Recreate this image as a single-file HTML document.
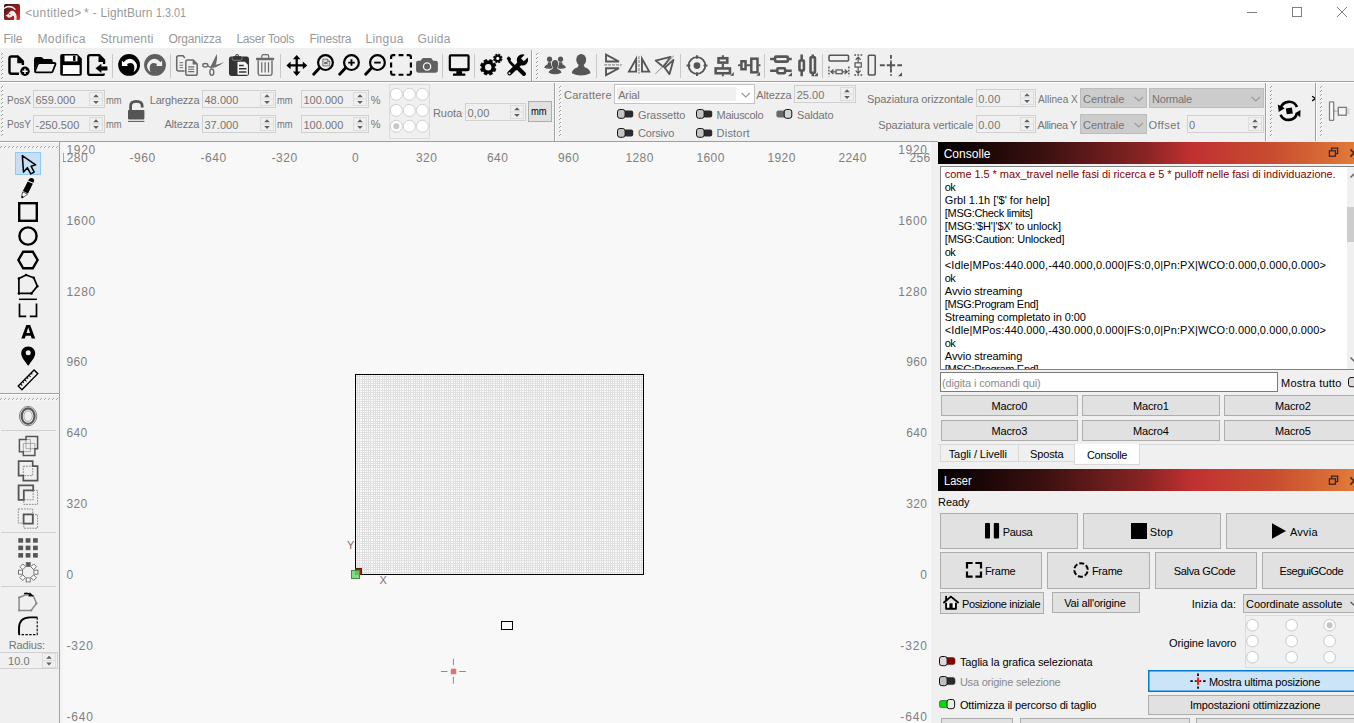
<!DOCTYPE html>
<html><head><meta charset="utf-8"><title>LightBurn</title>
<style>
html,body{margin:0;padding:0;overflow:hidden;}
#root{position:absolute;left:0;top:0;width:1354px;height:723px;overflow:hidden;}
body{width:1354px;height:723px;overflow:hidden;position:relative;background:#f0f0f0;font-family:"Liberation Sans",sans-serif;font-size:11px;color:#000;}
.a{position:absolute;box-sizing:border-box;overflow:hidden;}
.t{position:absolute;white-space:pre;}
.inp{background:#f0f0f0;border:1px solid #d0d0d0;}
.btn{background:#e1e1e1;border:1px solid #adadad;}
.g{color:#787878;}
</style></head><body><div id="root">
<div class="a " style="left:0px;top:0px;width:1354px;height:49px;background:#fff;"></div>
<svg class="a" style="left:4px;top:4px;" width="16" height="16" viewBox="0 0 16 16"><defs><linearGradient id="lg1" x1="0" y1="0" x2="1" y2="1"><stop offset="0" stop-color="#2a0c0c"/><stop offset="0.35" stop-color="#7a1c20"/><stop offset="0.7" stop-color="#b0181e"/><stop offset="1" stop-color="#ff2626"/></linearGradient></defs>
<rect x="0" y="0" width="16" height="16" rx="1.6" fill="url(#lg1)"/>
<path d="M0 4C2 1.400 8.200 0.400 12 5.400L11 6C8 2.600 3 2.800 0 5.200Z" fill="#f6eeee"/>
<path d="M7 7C9 6 11.600 8 12.400 11C12.800 13 12.700 15 12.400 16L9.800 16C10.800 14 10.400 12 8.800 11.400C8 13 6 13.800 4 13.600L3.200 12.400L1.600 11.600L4.400 10C5 8.600 6 7.600 7 7Z" fill="#f8f0f0"/>
<circle cx="5.800" cy="10.600" r="0.700" fill="#a01c24"/></svg>
<span class="t" style="left:25.20px;top:5px;font-size:12px;line-height:16px;letter-spacing:0.365px;color:#999;">&lt;untitled&gt;</span>
<span class="t" style="left:83.90px;top:5px;font-size:12px;line-height:16px;color:#999;">*</span>
<span class="t" style="left:92.80px;top:5px;font-size:12px;line-height:16px;color:#999;">-</span>
<span class="t" style="left:100.60px;top:5px;font-size:12px;line-height:16px;letter-spacing:0.066px;color:#999;">LightBurn</span>
<span class="t" style="left:156.00px;top:5px;font-size:12px;line-height:16px;color:#999;transform:scaleX(0.8992);transform-origin:0 0;">1.3.01</span>
<svg class="a" style="left:1247px;top:6px;" width="12" height="12" viewBox="0 0 12 12"><path d="M0 6.5H10" stroke="#808080" stroke-width="1" fill="none"/></svg>
<svg class="a" style="left:1291px;top:6px;" width="12" height="12" viewBox="0 0 12 12"><rect x="1.5" y="1.5" width="9" height="9" stroke="#808080" stroke-width="1" fill="none"/></svg>
<svg class="a" style="left:1336px;top:6px;" width="12" height="12" viewBox="0 0 12 12"><path d="M1 1L11 11M11 1L1 11" stroke="#808080" stroke-width="1" fill="none"/></svg>
<span class="t" style="left:3.40px;top:31px;font-size:12px;line-height:16px;letter-spacing:-0.112px;color:#999;">File</span>
<span class="t" style="left:37.40px;top:31px;font-size:12px;line-height:16px;letter-spacing:0.474px;color:#999;">Modifica</span>
<span class="t" style="left:100.40px;top:31px;font-size:12px;line-height:16px;letter-spacing:0.206px;color:#999;">Strumenti</span>
<span class="t" style="left:168.40px;top:31px;font-size:12px;line-height:16px;letter-spacing:-0.211px;color:#999;">Organizza</span>
<span class="t" style="left:236.40px;top:31px;font-size:12px;line-height:16px;letter-spacing:-0.315px;color:#999;">Laser Tools</span>
<span class="t" style="left:309.40px;top:31px;font-size:12px;line-height:16px;letter-spacing:-0.193px;color:#999;">Finestra</span>
<span class="t" style="left:365.40px;top:31px;font-size:12px;line-height:16px;letter-spacing:0.393px;color:#999;">Lingua</span>
<span class="t" style="left:417.40px;top:31px;font-size:12px;line-height:16px;letter-spacing:0.245px;color:#999;">Guida</span>
<div class="a " style="left:0px;top:48px;width:1354px;height:1px;background:#f0f0f0;"></div>
<div class="a " style="left:0px;top:50px;width:1354px;height:32px;background:#f0f0f0;"></div>
<div class="a " style="left:0px;top:81px;width:1354px;height:1px;background:#a0a0a0;"></div>
<div class="a " style="left:0px;top:82px;width:1354px;height:1px;background:#fff;"></div>
<div class="a " style="left:0px;top:83px;width:1354px;height:59px;background:#f0f0f0;"></div>
<div class="a " style="left:0px;top:141px;width:938px;height:1px;background:#a0a0a0;"></div>
<svg class="a" style="left:1px;top:53px;" width="3" height="26" viewBox="0 0 3 26"><rect x="1" y="1" width="1" height="1" fill="#fff"/><rect x="2" y="2" width="1" height="1" fill="#fff"/><rect x="1" y="0" width="1" height="1" fill="#a0a0a0"/><rect x="0" y="1" width="1" height="1" fill="#a0a0a0"/><rect x="1" y="5" width="1" height="1" fill="#fff"/><rect x="2" y="6" width="1" height="1" fill="#fff"/><rect x="1" y="4" width="1" height="1" fill="#a0a0a0"/><rect x="0" y="5" width="1" height="1" fill="#a0a0a0"/><rect x="1" y="9" width="1" height="1" fill="#fff"/><rect x="2" y="10" width="1" height="1" fill="#fff"/><rect x="1" y="8" width="1" height="1" fill="#a0a0a0"/><rect x="0" y="9" width="1" height="1" fill="#a0a0a0"/><rect x="1" y="13" width="1" height="1" fill="#fff"/><rect x="2" y="14" width="1" height="1" fill="#fff"/><rect x="1" y="12" width="1" height="1" fill="#a0a0a0"/><rect x="0" y="13" width="1" height="1" fill="#a0a0a0"/><rect x="1" y="17" width="1" height="1" fill="#fff"/><rect x="2" y="18" width="1" height="1" fill="#fff"/><rect x="1" y="16" width="1" height="1" fill="#a0a0a0"/><rect x="0" y="17" width="1" height="1" fill="#a0a0a0"/><rect x="1" y="21" width="1" height="1" fill="#fff"/><rect x="2" y="22" width="1" height="1" fill="#fff"/><rect x="1" y="20" width="1" height="1" fill="#a0a0a0"/><rect x="0" y="21" width="1" height="1" fill="#a0a0a0"/><rect x="1" y="25" width="1" height="1" fill="#fff"/><rect x="2" y="26" width="1" height="1" fill="#fff"/><rect x="1" y="24" width="1" height="1" fill="#a0a0a0"/><rect x="0" y="25" width="1" height="1" fill="#a0a0a0"/></svg>
<svg class="a" style="left:4px;top:50px;" width="110" height="32" viewBox="0 0 1354 394">
<path d="M185 292H92Q67 292 67 267V105Q67 80 92 80H172L232 140V185" fill="none" stroke="#000" stroke-width="30" stroke-linejoin="round"/>
<path d="M163 66L247 150V162H163Z" fill="#000"/>
<circle cx="258" cy="262" r="70" fill="#f0f0f0"/><circle cx="258" cy="262" r="58" fill="#000"/>
<path d="M226 262H290M258 230V294" stroke="#fff" stroke-width="17"/>
<path d="M370 110Q370 85 395 85H452Q468 85 478 98L490 112H578Q600 112 600 134V152H440Q415 152 407 172L370 272Z" fill="#000"/>
<path d="M440 160H618Q640 160 632 180L600 262Q594 276 576 276H398Q376 276 384 256L414 178Q421 160 440 160Z" fill="#f0f0f0" stroke="#000" stroke-width="22" stroke-linejoin="round"/>
<path d="M715 48H902L958 104V296Q958 318 936 318H715Q692 318 692 296V70Q692 48 715 48Z" fill="#000"/>
<rect x="745" y="68" width="160" height="72" fill="#fff"/><rect x="850" y="72" width="30" height="62" fill="#000"/>
<rect x="725" y="186" width="205" height="110" fill="#fff"/>
<path d="M1230 288Q1230 306 1206 306H1060Q1036 306 1036 282V86Q1036 62 1060 62H1172L1232 124V172" fill="none" stroke="#000" stroke-width="28" stroke-linejoin="round"/>
<path d="M1163 50L1246 134V148H1163Z" fill="#000"/>
<path d="M1130 226L1196 174V205H1270V248H1196V278Z" fill="#000" stroke="#000" stroke-width="6" stroke-linejoin="round"/>
</svg>
<div class="a " style="left:112px;top:54px;width:1px;height:24px;background:#c8c8c8;"></div>
<svg class="a" style="left:114px;top:50px;" width="110" height="32" viewBox="0 0 1354 394">
<g transform="scale(0.5454)"><circle cx="340" cy="338" r="246" fill="#000"/><path d="M178 238L216 276Q268 204 350 198Q470 210 515 330Q535 430 440 505Q480 400 440 325Q390 270 310 305Q280 325 312 362H178Z" fill="#fff"/>
<circle cx="925" cy="338" r="246" fill="#5f5f5f"/><path d="M 1087 238 L 1049 276 Q 997 204 915 198 Q 795 210 750.0 330 Q 730.0 430 825.0 505 Q 785.0 400 825.0 325 Q 875.0 270 955.0 305 Q 985.0 325 953.0 362 H 1087.0 Z" fill="#f2f2f2"/></g>
<path d="M872 98L850 72H796Q772 72 772 96V234Q772 258 796 258H868" fill="none" stroke="#6a6a6a" stroke-width="19"/>
<path d="M806 156H850M806 187H850M806 218H850" stroke="#6a6a6a" stroke-width="12"/>
<path d="M906 122H975L1024 172V290Q1024 312 1002 312H906Q884 312 884 290V144Q884 122 906 122Z" fill="#f0f0f0" stroke="#6a6a6a" stroke-width="19"/>
<path d="M968 122V180H1024Z" fill="#6a6a6a"/>
<path d="M913 207H988M913 237H988M913 267H988" stroke="#6a6a6a" stroke-width="15"/>
</svg>
<div class="a " style="left:170px;top:54px;width:1px;height:24px;background:#c8c8c8;"></div>
<svg class="a" style="left:198px;top:50px;" width="110" height="32" viewBox="0 0 1354 394">
<ellipse cx="90" cy="189" rx="32" ry="22" fill="none" stroke="#6a6a6a" stroke-width="17"/>
<ellipse cx="170" cy="273" rx="24" ry="39" fill="none" stroke="#6a6a6a" stroke-width="17"/>
<path d="M124 198L172 222" stroke="#6a6a6a" stroke-width="16"/>
<path d="M150 212L200 222Q244 140 232 50Q196 120 150 212Z" fill="#6a6a6a"/>
<path d="M202 186Q262 176 320 148Q270 196 212 214Z" fill="#6a6a6a"/>
<rect x="381" y="80" width="247" height="240" rx="30" fill="#333"/>
<circle cx="481" cy="70" r="22" fill="#333"/><circle cx="481" cy="68" r="9" fill="#f0f0f0"/>
<rect x="430" y="78" width="102" height="34" rx="6" fill="#333"/>
<path d="M420 90V108Q420 126 438 126H524Q542 126 542 108V90" fill="none" stroke="#f0f0f0" stroke-width="5"/>
<path d="M486 152Q486 146 492 146H577L614 183V306H486Z" fill="#f6f6f6"/>
<path d="M505 191H563M505 231H596M505 271H596" stroke="#333" stroke-width="16"/>
<rect x="714" y="95" width="222" height="30" rx="8" fill="#6a6a6a"/>
<path d="M785 96V76Q785 56 805 56H850Q870 56 870 76V96" fill="none" stroke="#6a6a6a" stroke-width="15"/>
<path d="M741 128V290Q741 312 763 312H889Q911 312 911 290V128" fill="none" stroke="#6a6a6a" stroke-width="17"/>
<path d="M785 150V276M826 150V276M868 150V276" stroke="#6a6a6a" stroke-width="15"/>
<path d="M1215 62L1262 115H1229V176H1290V143L1345 190L1290 237V204H1229V265H1262L1215 320L1168 265H1201V204H1140V237L1088 190L1140 143V176H1201V115H1168Z" fill="#000"/>
</svg>
<div class="a " style="left:280px;top:54px;width:1px;height:24px;background:#c8c8c8;"></div>
<svg class="a" style="left:308px;top:50px;" width="110" height="32" viewBox="0 0 1354 394"><circle cx="215" cy="155" r="91" fill="#f0f0f0" stroke="#000" stroke-width="27"/><path d="M142 223L70 298" stroke="#000" stroke-width="36" stroke-linecap="round"/>
<path d="M182 112H240L268 140V196H182Z" fill="#d8d8d8" stroke="#555" stroke-width="9"/><path d="M238 112V142H268" fill="none" stroke="#555" stroke-width="8"/><path d="M198 150H240V170H198Z" fill="#555"/>
<circle cx="535" cy="155" r="91" fill="#f0f0f0" stroke="#000" stroke-width="27"/><path d="M462 223L390 298" stroke="#000" stroke-width="36" stroke-linecap="round"/><path d="M495 155H575M535 115V195" stroke="#000" stroke-width="23"/>
<circle cx="855" cy="155" r="91" fill="#f0f0f0" stroke="#000" stroke-width="27"/><path d="M782 223L710 298" stroke="#000" stroke-width="36" stroke-linecap="round"/><path d="M815 155H895" stroke="#000" stroke-width="23"/>
<path d="M1023 110V88Q1023 63 1048 63H1075M1115 63H1175M1215 63H1242Q1267 63 1267 88V110M1267 155V215M1267 255V280Q1267 305 1242 305H1215M1175 305H1115M1075 305H1048Q1023 305 1023 280V255M1023 215V155" fill="none" stroke="#000" stroke-width="27"/>
</svg>
<svg class="a" style="left:412px;top:50px;" width="120" height="32" viewBox="0 0 1354 361">
<path d="M70 120H98L112 98Q118 90 128 90H208Q218 90 224 98L238 120H268Q292 120 292 144V232Q292 256 268 256H70Q46 256 46 232V144Q46 120 70 120Z" fill="#606060"/>
<circle cx="170" cy="186" r="41" fill="none" stroke="#f4f4f4" stroke-width="15"/>
<rect x="427" y="60" width="211" height="168" rx="10" fill="#f0f0f0" stroke="#000" stroke-width="25"/><rect x="427" y="205" width="211" height="26" fill="#000"/>
<rect x="500" y="238" width="65" height="32" fill="#000"/><rect x="462" y="266" width="140" height="24" rx="6" fill="#000"/>
<path d="M948.1 213.3L935.2 244.4L917.6 238.2L903.2 252.6L909.4 270.2L878.3 283.1L870.1 266.3L849.9 266.3L841.7 283.1L810.6 270.2L816.8 252.6L802.4 238.2L784.8 244.4L771.9 213.3L788.7 205.1L788.7 184.9L771.9 176.7L784.8 145.6L802.4 151.8L816.8 137.4L810.6 119.8L841.7 106.9L849.9 123.7L870.1 123.7L878.3 106.9L909.4 119.8L903.2 137.4L917.6 151.8L935.2 145.6L948.1 176.7L931.3 184.9L931.3 205.1Z" fill="#000" stroke="#000" stroke-width="8" stroke-linejoin="round"/><circle cx="860" cy="195" r="36" fill="#f0f0f0"/><path d="M1017.0 105.1L1009.8 122.5L997.6 117.2L990.2 124.6L995.5 136.8L978.1 144.0L973.2 131.6L962.8 131.6L957.9 144.0L940.5 136.8L945.8 124.6L938.4 117.2L926.2 122.5L919.0 105.1L931.4 100.2L931.4 89.8L919.0 84.9L926.2 67.5L938.4 72.8L945.8 65.4L940.5 53.2L957.9 46.0L962.8 58.4L973.2 58.4L978.1 46.0L995.5 53.2L990.2 65.4L997.6 72.8L1009.8 67.5L1017.0 84.9L1004.6 89.8L1004.6 100.2Z" fill="#000" stroke="#000" stroke-width="8" stroke-linejoin="round"/><circle cx="968" cy="95" r="18" fill="#f0f0f0"/>
<path d="M1102 260L1218 148" stroke="#000" stroke-width="52" stroke-linecap="round"/>
<circle cx="1246" cy="112" r="64" fill="#000"/>
<path d="M1246 112L1330 28" stroke="#f0f0f0" stroke-width="46"/>
<circle cx="1100" cy="262" r="12" fill="#f0f0f0"/>
<path d="M1068 92L1092 70L1118 100L1112 122L1200 208L1178 230L1092 144L1084 120Z" fill="#000"/>
<path d="M1198 206L1264 270" stroke="#000" stroke-width="46" stroke-linecap="round"/>
</svg>
<div class="a " style="left:442px;top:54px;width:1px;height:24px;background:#c8c8c8;"></div>
<div class="a " style="left:474px;top:54px;width:1px;height:24px;background:#c8c8c8;"></div>
<div class="a " style="left:531px;top:50px;width:1px;height:31px;background:#a0a0a0;"></div>
<div class="a " style="left:532px;top:50px;width:1px;height:31px;background:#fff;"></div>
<svg class="a" style="left:536px;top:53px;" width="3" height="26" viewBox="0 0 3 26"><rect x="1" y="1" width="1" height="1" fill="#fff"/><rect x="2" y="2" width="1" height="1" fill="#fff"/><rect x="1" y="0" width="1" height="1" fill="#a0a0a0"/><rect x="0" y="1" width="1" height="1" fill="#a0a0a0"/><rect x="1" y="5" width="1" height="1" fill="#fff"/><rect x="2" y="6" width="1" height="1" fill="#fff"/><rect x="1" y="4" width="1" height="1" fill="#a0a0a0"/><rect x="0" y="5" width="1" height="1" fill="#a0a0a0"/><rect x="1" y="9" width="1" height="1" fill="#fff"/><rect x="2" y="10" width="1" height="1" fill="#fff"/><rect x="1" y="8" width="1" height="1" fill="#a0a0a0"/><rect x="0" y="9" width="1" height="1" fill="#a0a0a0"/><rect x="1" y="13" width="1" height="1" fill="#fff"/><rect x="2" y="14" width="1" height="1" fill="#fff"/><rect x="1" y="12" width="1" height="1" fill="#a0a0a0"/><rect x="0" y="13" width="1" height="1" fill="#a0a0a0"/><rect x="1" y="17" width="1" height="1" fill="#fff"/><rect x="2" y="18" width="1" height="1" fill="#fff"/><rect x="1" y="16" width="1" height="1" fill="#a0a0a0"/><rect x="0" y="17" width="1" height="1" fill="#a0a0a0"/><rect x="1" y="21" width="1" height="1" fill="#fff"/><rect x="2" y="22" width="1" height="1" fill="#fff"/><rect x="1" y="20" width="1" height="1" fill="#a0a0a0"/><rect x="0" y="21" width="1" height="1" fill="#a0a0a0"/><rect x="1" y="25" width="1" height="1" fill="#fff"/><rect x="2" y="26" width="1" height="1" fill="#fff"/><rect x="1" y="24" width="1" height="1" fill="#a0a0a0"/><rect x="0" y="25" width="1" height="1" fill="#a0a0a0"/></svg>
<svg class="a" style="left:536px;top:50px;" width="120" height="32" viewBox="0 0 1354 361">
<ellipse cx="153" cy="105" rx="29" ry="31" fill="#555"/><path d="M92 201Q96 174 131 162L135 138H170L174 166Q186 174 190 205Q139 221 92 201Z" fill="#555"/>
<ellipse cx="277" cy="105" rx="29" ry="31" fill="#555"/><path d="M338 201Q334 174 299 162L295 138H260L256 166Q244 174 240 205Q291 221 338 201Z" fill="#555"/>
<ellipse cx="215" cy="158" rx="41" ry="49" fill="#f0f0f0"/>
<path d="M136 258Q140 218 184 206L190 186H240L246 206Q290 218 294 258Q215 300 136 258Z" fill="#f0f0f0"/>
<ellipse cx="215" cy="158" rx="36" ry="44" fill="#555"/>
<path d="M143 256Q147 225 186 213L194 184H236L244 213Q283 225 287 256Q215 291 143 256Z" fill="#555"/>
<ellipse cx="510" cy="110" rx="56" ry="66" fill="#555"/>
<path d="M404 262Q406 214 470 194L486 160H534L550 194Q612 214 614 262Q510 312 404 262Z" fill="#555"/>
<path d="M790 52L936 130H790Z" fill="none" stroke="#555" stroke-width="21" stroke-linejoin="miter"/>
<path d="M790 284L936 206H790Z" fill="none" stroke="#555" stroke-width="21"/>
<path d="M770 168H968" stroke="#a8a8a8" stroke-width="19" stroke-dasharray="34 10"/>
<path d="M1048 244L1130 98V244Z" fill="none" stroke="#555" stroke-width="21"/>
<path d="M1278 244L1196 98V244Z" fill="none" stroke="#555" stroke-width="21"/>
<path d="M1162 70V268" stroke="#a8a8a8" stroke-width="19" stroke-dasharray="34 10"/>
</svg>
<div class="a " style="left:596px;top:54px;width:1px;height:24px;background:#c8c8c8;"></div>
<svg class="a" style="left:650px;top:50px;" width="120" height="32" viewBox="0 0 1354 361">
<path d="M64 120L232 78L150 190Z" fill="none" stroke="#555" stroke-width="21" stroke-linejoin="round"/>
<path d="M264 112L220 272L166 200Z" fill="none" stroke="#555" stroke-width="21" stroke-linejoin="round"/>
<path d="M60 270L270 64" stroke="#555" stroke-width="7"/><path d="M120 196L246 72" stroke="#a8a8a8" stroke-width="7" stroke-dasharray="14 8"/>
<circle cx="530" cy="175" r="94" fill="none" stroke="#555" stroke-width="21"/><circle cx="530" cy="175" r="38" fill="#555"/>
<path d="M530 58V100M530 250V292M412 175H455M605 175H648" stroke="#555" stroke-width="22"/>
<rect x="773" y="93" width="99" height="49" fill="none" stroke="#555" stroke-width="29"/>
<rect x="741" y="208" width="161" height="54" fill="none" stroke="#555" stroke-width="29"/>
<path d="M822 58V82M822 154V196M822 274V296" stroke="#555" stroke-width="24"/>
<path d="M946 248V290H904Z" fill="#555"/>
<rect x="1032" y="127" width="46" height="90" fill="none" stroke="#555" stroke-width="28"/>
<rect x="1143" y="98" width="70" height="154" fill="none" stroke="#555" stroke-width="28"/>
<path d="M994 172H1022M1090 172H1132M1224 172H1246" stroke="#555" stroke-width="24"/>
<path d="M1242 248V290H1200Z" fill="#555"/>
</svg>
<div class="a " style="left:680px;top:54px;width:1px;height:24px;background:#c8c8c8;"></div>
<div class="a " style="left:764px;top:54px;width:1px;height:24px;background:#c8c8c8;"></div>
<svg class="a" style="left:764px;top:50px;" width="150" height="32" viewBox="0 0 1354 289">
<rect x="100" y="60" width="115" height="45" rx="8" fill="none" stroke="#555" stroke-width="23"/>
<rect x="120" y="165" width="70" height="45" rx="8" fill="none" stroke="#555" stroke-width="23"/>
<path d="M55 82H100M215 82H250M55 187H120M190 187H250" stroke="#555" stroke-width="23"/>
<path d="M252 200V236H216Z" fill="#555"/>
<rect x="320" y="95" width="40" height="90" rx="6" fill="none" stroke="#555" stroke-width="23"/>
<rect x="420" y="65" width="40" height="140" rx="6" fill="none" stroke="#555" stroke-width="23"/>
<path d="M340 40V95M340 185V236M440 40V65M440 205V236" stroke="#555" stroke-width="23"/>
<path d="M486 200V236H450Z" fill="#555"/>
<rect x="587" y="47" width="176" height="52" rx="8" fill="none" stroke="#555" stroke-width="14"/>
<path d="M586 150V236M766 150V236" stroke="#555" stroke-width="13" stroke-dasharray="16 12"/>
<rect x="650" y="180" width="56" height="34" fill="none" stroke="#555" stroke-width="11"/>
<path d="M604 197H650M706 197H752M628 176L604 197L628 218M728 176L752 197L728 218" fill="none" stroke="#555" stroke-width="11"/>
<rect x="942" y="47" width="62" height="178" rx="8" fill="none" stroke="#555" stroke-width="14"/>
<path d="M815 46H898M815 226H898" stroke="#555" stroke-width="13" stroke-dasharray="16 12"/>
<rect x="822" y="116" width="56" height="38" fill="none" stroke="#555" stroke-width="11"/>
<path d="M850 64V116M850 154V210M828 88L850 64L872 88M828 186L850 210L872 186" fill="none" stroke="#555" stroke-width="11"/>
<path d="M1146 46V106M1146 170V232" stroke="#555" stroke-width="17" stroke-dasharray="34 14"/>
<path d="M1046 138H1090M1204 138H1246" stroke="#555" stroke-width="17"/>
<path d="M1108 138H1184M1146 106V170" stroke="#555" stroke-width="17"/>
<path d="M1246 200V236H1210Z" fill="#555"/>
</svg>
<div class="a " style="left:822px;top:54px;width:1px;height:24px;background:#c8c8c8;"></div>
<svg class="a" style="left:1px;top:86px;" width="3" height="52" viewBox="0 0 3 52"><rect x="1" y="1" width="1" height="1" fill="#fff"/><rect x="2" y="2" width="1" height="1" fill="#fff"/><rect x="1" y="0" width="1" height="1" fill="#a0a0a0"/><rect x="0" y="1" width="1" height="1" fill="#a0a0a0"/><rect x="1" y="5" width="1" height="1" fill="#fff"/><rect x="2" y="6" width="1" height="1" fill="#fff"/><rect x="1" y="4" width="1" height="1" fill="#a0a0a0"/><rect x="0" y="5" width="1" height="1" fill="#a0a0a0"/><rect x="1" y="9" width="1" height="1" fill="#fff"/><rect x="2" y="10" width="1" height="1" fill="#fff"/><rect x="1" y="8" width="1" height="1" fill="#a0a0a0"/><rect x="0" y="9" width="1" height="1" fill="#a0a0a0"/><rect x="1" y="13" width="1" height="1" fill="#fff"/><rect x="2" y="14" width="1" height="1" fill="#fff"/><rect x="1" y="12" width="1" height="1" fill="#a0a0a0"/><rect x="0" y="13" width="1" height="1" fill="#a0a0a0"/><rect x="1" y="17" width="1" height="1" fill="#fff"/><rect x="2" y="18" width="1" height="1" fill="#fff"/><rect x="1" y="16" width="1" height="1" fill="#a0a0a0"/><rect x="0" y="17" width="1" height="1" fill="#a0a0a0"/><rect x="1" y="21" width="1" height="1" fill="#fff"/><rect x="2" y="22" width="1" height="1" fill="#fff"/><rect x="1" y="20" width="1" height="1" fill="#a0a0a0"/><rect x="0" y="21" width="1" height="1" fill="#a0a0a0"/><rect x="1" y="25" width="1" height="1" fill="#fff"/><rect x="2" y="26" width="1" height="1" fill="#fff"/><rect x="1" y="24" width="1" height="1" fill="#a0a0a0"/><rect x="0" y="25" width="1" height="1" fill="#a0a0a0"/><rect x="1" y="29" width="1" height="1" fill="#fff"/><rect x="2" y="30" width="1" height="1" fill="#fff"/><rect x="1" y="28" width="1" height="1" fill="#a0a0a0"/><rect x="0" y="29" width="1" height="1" fill="#a0a0a0"/><rect x="1" y="33" width="1" height="1" fill="#fff"/><rect x="2" y="34" width="1" height="1" fill="#fff"/><rect x="1" y="32" width="1" height="1" fill="#a0a0a0"/><rect x="0" y="33" width="1" height="1" fill="#a0a0a0"/><rect x="1" y="37" width="1" height="1" fill="#fff"/><rect x="2" y="38" width="1" height="1" fill="#fff"/><rect x="1" y="36" width="1" height="1" fill="#a0a0a0"/><rect x="0" y="37" width="1" height="1" fill="#a0a0a0"/><rect x="1" y="41" width="1" height="1" fill="#fff"/><rect x="2" y="42" width="1" height="1" fill="#fff"/><rect x="1" y="40" width="1" height="1" fill="#a0a0a0"/><rect x="0" y="41" width="1" height="1" fill="#a0a0a0"/><rect x="1" y="45" width="1" height="1" fill="#fff"/><rect x="2" y="46" width="1" height="1" fill="#fff"/><rect x="1" y="44" width="1" height="1" fill="#a0a0a0"/><rect x="0" y="45" width="1" height="1" fill="#a0a0a0"/><rect x="1" y="49" width="1" height="1" fill="#fff"/><rect x="2" y="50" width="1" height="1" fill="#fff"/><rect x="1" y="48" width="1" height="1" fill="#a0a0a0"/><rect x="0" y="49" width="1" height="1" fill="#a0a0a0"/></svg>
<span class="t" style="left:6.80px;top:93px;font-size:11px;line-height:15px;color:#757575;transform:scaleX(0.9128);transform-origin:0 0;">PosX</span>
<div class="a inp" style="left:33px;top:90px;width:72px;height:18px;"></div>
<span class="t" style="left:35.40px;top:93px;font-size:11px;line-height:15px;letter-spacing:0.040px;color:#757575;">659.000</span>
<div class="a " style="left:89px;top:92px;width:14px;height:14px;border:1px solid #dcdcdc;background:#f0f0f0;"></div>
<svg class="a" style="left:89px;top:92px;" width="14" height="14" viewBox="0 0 14 14"><path d="M4.2 5.2L7.0 2.2L9.8 5.2Z" fill="#606060"/><path d="M4.2 9.0L7.0 12.0L9.8 9.0Z" fill="#606060"/><path d="M1 7.0H13" stroke="#dcdcdc" stroke-width="1"/></svg>
<span class="t" style="left:106.00px;top:93px;font-size:11px;line-height:15px;color:#757575;transform:scaleX(0.8512);transform-origin:0 0;">mm</span>
<span class="t" style="left:6.80px;top:117px;font-size:11px;line-height:15px;color:#757575;transform:scaleX(0.9128);transform-origin:0 0;">PosY</span>
<div class="a inp" style="left:33px;top:115px;width:72px;height:18px;"></div>
<span class="t" style="left:35.40px;top:118px;font-size:11px;line-height:15px;letter-spacing:0.082px;color:#757575;">-250.500</span>
<div class="a " style="left:89px;top:117px;width:14px;height:14px;border:1px solid #dcdcdc;background:#f0f0f0;"></div>
<svg class="a" style="left:89px;top:117px;" width="14" height="14" viewBox="0 0 14 14"><path d="M4.2 5.2L7.0 2.2L9.8 5.2Z" fill="#606060"/><path d="M4.2 9.0L7.0 12.0L9.8 9.0Z" fill="#606060"/><path d="M1 7.0H13" stroke="#dcdcdc" stroke-width="1"/></svg>
<span class="t" style="left:106.00px;top:117px;font-size:11px;line-height:15px;color:#757575;transform:scaleX(0.8512);transform-origin:0 0;">mm</span>
<svg class="a" style="left:126px;top:98px;" width="20" height="26" viewBox="0 0 20 26"><path d="M4.600 12V8Q4.600 3.400 10.300 3.400Q16.200 3.400 16.200 8V9.600" fill="none" stroke="#555" stroke-width="2.800"/>
<rect x="2" y="12" width="16.4" height="9.4" rx="0.8" fill="#555"/><path d="M2 23.4H18.4" stroke="#555" stroke-width="1"/></svg>
<span class="t" style="left:149.80px;top:93px;font-size:11px;line-height:15px;letter-spacing:-0.209px;color:#757575;">Larghezza</span>
<div class="a inp" style="left:202px;top:90px;width:74px;height:18px;"></div>
<span class="t" style="left:204.40px;top:93px;font-size:11px;line-height:15px;letter-spacing:0.071px;color:#757575;">48.000</span>
<div class="a " style="left:260px;top:92px;width:14px;height:14px;border:1px solid #dcdcdc;background:#f0f0f0;"></div>
<svg class="a" style="left:260px;top:92px;" width="14" height="14" viewBox="0 0 14 14"><path d="M4.2 5.2L7.0 2.2L9.8 5.2Z" fill="#606060"/><path d="M4.2 9.0L7.0 12.0L9.8 9.0Z" fill="#606060"/><path d="M1 7.0H13" stroke="#dcdcdc" stroke-width="1"/></svg>
<span class="t" style="left:276.90px;top:93px;font-size:11px;line-height:15px;color:#757575;transform:scaleX(0.8512);transform-origin:0 0;">mm</span>
<div class="a inp" style="left:301px;top:90px;width:68px;height:18px;"></div>
<span class="t" style="left:303.40px;top:93px;font-size:11px;line-height:15px;letter-spacing:0.040px;color:#757575;">100.000</span>
<div class="a " style="left:353px;top:92px;width:14px;height:14px;border:1px solid #dcdcdc;background:#f0f0f0;"></div>
<svg class="a" style="left:353px;top:92px;" width="14" height="14" viewBox="0 0 14 14"><path d="M4.2 5.2L7.0 2.2L9.8 5.2Z" fill="#606060"/><path d="M4.2 9.0L7.0 12.0L9.8 9.0Z" fill="#606060"/><path d="M1 7.0H13" stroke="#dcdcdc" stroke-width="1"/></svg>
<span class="t" style="left:370.80px;top:93px;font-size:11px;line-height:15px;color:#757575;">%</span>
<span class="t" style="left:164.40px;top:117px;font-size:11px;line-height:15px;letter-spacing:-0.162px;color:#757575;">Altezza</span>
<div class="a inp" style="left:202px;top:115px;width:74px;height:18px;"></div>
<span class="t" style="left:204.40px;top:118px;font-size:11px;line-height:15px;letter-spacing:0.071px;color:#757575;">37.000</span>
<div class="a " style="left:260px;top:117px;width:14px;height:14px;border:1px solid #dcdcdc;background:#f0f0f0;"></div>
<svg class="a" style="left:260px;top:117px;" width="14" height="14" viewBox="0 0 14 14"><path d="M4.2 5.2L7.0 2.2L9.8 5.2Z" fill="#606060"/><path d="M4.2 9.0L7.0 12.0L9.8 9.0Z" fill="#606060"/><path d="M1 7.0H13" stroke="#dcdcdc" stroke-width="1"/></svg>
<span class="t" style="left:276.90px;top:117px;font-size:11px;line-height:15px;color:#757575;transform:scaleX(0.8512);transform-origin:0 0;">mm</span>
<div class="a inp" style="left:301px;top:115px;width:68px;height:18px;"></div>
<span class="t" style="left:303.40px;top:118px;font-size:11px;line-height:15px;letter-spacing:0.040px;color:#757575;">100.000</span>
<div class="a " style="left:353px;top:117px;width:14px;height:14px;border:1px solid #dcdcdc;background:#f0f0f0;"></div>
<svg class="a" style="left:353px;top:117px;" width="14" height="14" viewBox="0 0 14 14"><path d="M4.2 5.2L7.0 2.2L9.8 5.2Z" fill="#606060"/><path d="M4.2 9.0L7.0 12.0L9.8 9.0Z" fill="#606060"/><path d="M1 7.0H13" stroke="#dcdcdc" stroke-width="1"/></svg>
<span class="t" style="left:370.80px;top:117px;font-size:11px;line-height:15px;color:#757575;">%</span>
<div class="a " style="left:389px;top:84px;width:41px;height:55px;border:1px solid #dcdcdc;"></div>
<svg class="a" style="left:389px;top:84px;" width="41" height="55" viewBox="0 0 41 55"><circle cx="7.3" cy="10.3" r="6" fill="#fff" stroke="#d0d0d0" stroke-width="1"/><circle cx="20.3" cy="10.3" r="6" fill="#fff" stroke="#d0d0d0" stroke-width="1"/><circle cx="33.4" cy="10.3" r="6" fill="#fff" stroke="#d0d0d0" stroke-width="1"/><circle cx="7.3" cy="26.4" r="6" fill="#fff" stroke="#d0d0d0" stroke-width="1"/><circle cx="20.3" cy="26.4" r="6" fill="#fff" stroke="#d0d0d0" stroke-width="1"/><circle cx="33.4" cy="26.4" r="6" fill="#fff" stroke="#d0d0d0" stroke-width="1"/><circle cx="7.3" cy="42.3" r="6" fill="#fff" stroke="#d0d0d0" stroke-width="1"/><circle cx="20.3" cy="42.3" r="6" fill="#fff" stroke="#d0d0d0" stroke-width="1"/><circle cx="33.4" cy="42.3" r="6" fill="#fff" stroke="#d0d0d0" stroke-width="1"/><circle cx="7.3" cy="42.3" r="3" fill="#c8c8c8"/></svg>
<span class="t" style="left:432.90px;top:106px;font-size:11px;line-height:15px;letter-spacing:-0.038px;color:#757575;">Ruota</span>
<div class="a inp" style="left:465px;top:103px;width:61px;height:18px;"></div>
<span class="t" style="left:467.40px;top:106px;font-size:11px;line-height:15px;letter-spacing:0.197px;color:#757575;">0,00</span>
<div class="a " style="left:510px;top:105px;width:14px;height:14px;border:1px solid #dcdcdc;background:#f0f0f0;"></div>
<svg class="a" style="left:510px;top:105px;" width="14" height="14" viewBox="0 0 14 14"><path d="M4.2 5.2L7.0 2.2L9.8 5.2Z" fill="#606060"/><path d="M4.2 9.0L7.0 12.0L9.8 9.0Z" fill="#606060"/><path d="M1 7.0H13" stroke="#dcdcdc" stroke-width="1"/></svg>
<div class="a btn" style="left:528px;top:101px;width:24px;height:21px;"></div>
<span class="t" style="left:531.10px;top:104px;font-size:11px;line-height:15px;color:#000;transform:scaleX(0.8567);transform-origin:0 0;">mm</span>
<div class="a " style="left:554px;top:83px;width:1px;height:58px;background:#a0a0a0;"></div>
<div class="a " style="left:555px;top:83px;width:1px;height:58px;background:#fff;"></div>
<svg class="a" style="left:559px;top:86px;" width="3" height="52" viewBox="0 0 3 52"><rect x="1" y="1" width="1" height="1" fill="#fff"/><rect x="2" y="2" width="1" height="1" fill="#fff"/><rect x="1" y="0" width="1" height="1" fill="#a0a0a0"/><rect x="0" y="1" width="1" height="1" fill="#a0a0a0"/><rect x="1" y="5" width="1" height="1" fill="#fff"/><rect x="2" y="6" width="1" height="1" fill="#fff"/><rect x="1" y="4" width="1" height="1" fill="#a0a0a0"/><rect x="0" y="5" width="1" height="1" fill="#a0a0a0"/><rect x="1" y="9" width="1" height="1" fill="#fff"/><rect x="2" y="10" width="1" height="1" fill="#fff"/><rect x="1" y="8" width="1" height="1" fill="#a0a0a0"/><rect x="0" y="9" width="1" height="1" fill="#a0a0a0"/><rect x="1" y="13" width="1" height="1" fill="#fff"/><rect x="2" y="14" width="1" height="1" fill="#fff"/><rect x="1" y="12" width="1" height="1" fill="#a0a0a0"/><rect x="0" y="13" width="1" height="1" fill="#a0a0a0"/><rect x="1" y="17" width="1" height="1" fill="#fff"/><rect x="2" y="18" width="1" height="1" fill="#fff"/><rect x="1" y="16" width="1" height="1" fill="#a0a0a0"/><rect x="0" y="17" width="1" height="1" fill="#a0a0a0"/><rect x="1" y="21" width="1" height="1" fill="#fff"/><rect x="2" y="22" width="1" height="1" fill="#fff"/><rect x="1" y="20" width="1" height="1" fill="#a0a0a0"/><rect x="0" y="21" width="1" height="1" fill="#a0a0a0"/><rect x="1" y="25" width="1" height="1" fill="#fff"/><rect x="2" y="26" width="1" height="1" fill="#fff"/><rect x="1" y="24" width="1" height="1" fill="#a0a0a0"/><rect x="0" y="25" width="1" height="1" fill="#a0a0a0"/><rect x="1" y="29" width="1" height="1" fill="#fff"/><rect x="2" y="30" width="1" height="1" fill="#fff"/><rect x="1" y="28" width="1" height="1" fill="#a0a0a0"/><rect x="0" y="29" width="1" height="1" fill="#a0a0a0"/><rect x="1" y="33" width="1" height="1" fill="#fff"/><rect x="2" y="34" width="1" height="1" fill="#fff"/><rect x="1" y="32" width="1" height="1" fill="#a0a0a0"/><rect x="0" y="33" width="1" height="1" fill="#a0a0a0"/><rect x="1" y="37" width="1" height="1" fill="#fff"/><rect x="2" y="38" width="1" height="1" fill="#fff"/><rect x="1" y="36" width="1" height="1" fill="#a0a0a0"/><rect x="0" y="37" width="1" height="1" fill="#a0a0a0"/><rect x="1" y="41" width="1" height="1" fill="#fff"/><rect x="2" y="42" width="1" height="1" fill="#fff"/><rect x="1" y="40" width="1" height="1" fill="#a0a0a0"/><rect x="0" y="41" width="1" height="1" fill="#a0a0a0"/><rect x="1" y="45" width="1" height="1" fill="#fff"/><rect x="2" y="46" width="1" height="1" fill="#fff"/><rect x="1" y="44" width="1" height="1" fill="#a0a0a0"/><rect x="0" y="45" width="1" height="1" fill="#a0a0a0"/><rect x="1" y="49" width="1" height="1" fill="#fff"/><rect x="2" y="50" width="1" height="1" fill="#fff"/><rect x="1" y="48" width="1" height="1" fill="#a0a0a0"/><rect x="0" y="49" width="1" height="1" fill="#a0a0a0"/></svg>
<span class="t" style="left:564.00px;top:88px;font-size:11px;line-height:15px;letter-spacing:0.206px;color:#757575;">Carattere</span>
<div class="a " style="left:614px;top:84px;width:141px;height:20px;background:#fff;border:1px solid #c4c4c4;"></div>
<div class="a " style="left:617px;top:87px;width:119px;height:14px;background:#f0f0f0;"></div>
<span class="t" style="left:618.20px;top:88px;font-size:11px;line-height:15px;letter-spacing:-0.151px;color:#757575;">Arial</span>
<svg class="a" style="left:741.4px;top:91px;" width="12" height="8" viewBox="0 0 12 8"><path d="M0.6 2L4.8 6L9.0 2" fill="none" stroke="#9a9a9a" stroke-width="1.1"/></svg>
<svg class="a" style="left:616.7px;top:109.3px;" width="17" height="10" viewBox="0 0 17 10"><rect x="7" y="1.500" width="9.200" height="6.900" rx="2" fill="#2b2b2b"/><rect x="0.500" y="0.500" width="7.600" height="8.800" rx="2.400" fill="#c4c4c4" stroke="#111" stroke-width="1"/></svg>
<span class="t" style="left:637.90px;top:108px;font-size:11px;line-height:15px;letter-spacing:-0.023px;color:#757575;">Grassetto</span>
<svg class="a" style="left:616.7px;top:127.5px;" width="17" height="10" viewBox="0 0 17 10"><rect x="7" y="1.500" width="9.200" height="6.900" rx="2" fill="#2b2b2b"/><rect x="0.500" y="0.500" width="7.600" height="8.800" rx="2.400" fill="#c4c4c4" stroke="#111" stroke-width="1"/></svg>
<span class="t" style="left:637.90px;top:126px;font-size:11px;line-height:15px;letter-spacing:-0.148px;color:#757575;">Corsivo</span>
<svg class="a" style="left:695.6px;top:109.3px;" width="17" height="10" viewBox="0 0 17 10"><rect x="7" y="1.500" width="9.200" height="6.900" rx="2" fill="#2b2b2b"/><rect x="0.500" y="0.500" width="7.600" height="8.800" rx="2.400" fill="#c4c4c4" stroke="#111" stroke-width="1"/></svg>
<span class="t" style="left:716.60px;top:108px;font-size:11px;line-height:15px;letter-spacing:-0.315px;color:#757575;">Maiuscolo</span>
<svg class="a" style="left:695.6px;top:127.5px;" width="17" height="10" viewBox="0 0 17 10"><rect x="7" y="1.500" width="9.200" height="6.900" rx="2" fill="#2b2b2b"/><rect x="0.500" y="0.500" width="7.600" height="8.800" rx="2.400" fill="#c4c4c4" stroke="#111" stroke-width="1"/></svg>
<span class="t" style="left:716.60px;top:126px;font-size:11px;line-height:15px;letter-spacing:0.203px;color:#757575;">Distort</span>
<svg class="a" style="left:775.8px;top:109.3px;" width="17" height="10" viewBox="0 0 17 10"><rect x="0.400" y="1.500" width="9.200" height="6.900" rx="2" fill="#6a6a6a"/><rect x="8.200" y="0.500" width="7.600" height="8.800" rx="2.400" fill="#d4d4d4" stroke="#111" stroke-width="1"/></svg>
<span class="t" style="left:797.00px;top:108px;font-size:11px;line-height:15px;letter-spacing:-0.118px;color:#757575;">Saldato</span>
<span class="t" style="left:756.30px;top:88px;font-size:11px;line-height:15px;letter-spacing:-0.145px;color:#757575;">Altezza</span>
<div class="a inp" style="left:794px;top:85px;width:62px;height:18px;"></div>
<span class="t" style="left:796.70px;top:88px;font-size:11px;line-height:15px;letter-spacing:0.018px;color:#757575;">25.00</span>
<div class="a " style="left:840px;top:87px;width:14px;height:14px;border:1px solid #dcdcdc;background:#f0f0f0;"></div>
<svg class="a" style="left:840px;top:87px;" width="14" height="14" viewBox="0 0 14 14"><path d="M4.2 5.2L7.0 2.2L9.8 5.2Z" fill="#606060"/><path d="M4.2 9.0L7.0 12.0L9.8 9.0Z" fill="#606060"/><path d="M1 7.0H13" stroke="#dcdcdc" stroke-width="1"/></svg>
<span class="t" style="left:867.10px;top:92px;font-size:11px;line-height:15px;letter-spacing:-0.126px;color:#757575;">Spaziatura orizzontale</span>
<div class="a inp" style="left:976px;top:89px;width:60px;height:18px;"></div>
<span class="t" style="left:978.20px;top:92px;font-size:11px;line-height:15px;letter-spacing:0.230px;color:#757575;">0.00</span>
<div class="a " style="left:1020px;top:91px;width:14px;height:14px;border:1px solid #dcdcdc;background:#f0f0f0;"></div>
<svg class="a" style="left:1020px;top:91px;" width="14" height="14" viewBox="0 0 14 14"><path d="M4.2 5.2L7.0 2.2L9.8 5.2Z" fill="#606060"/><path d="M4.2 9.0L7.0 12.0L9.8 9.0Z" fill="#606060"/><path d="M1 7.0H13" stroke="#dcdcdc" stroke-width="1"/></svg>
<span class="t" style="left:878.20px;top:118px;font-size:11px;line-height:15px;letter-spacing:-0.079px;color:#757575;">Spaziatura verticale</span>
<div class="a inp" style="left:976px;top:115px;width:60px;height:18px;"></div>
<span class="t" style="left:978.20px;top:118px;font-size:11px;line-height:15px;letter-spacing:0.230px;color:#757575;">0.00</span>
<div class="a " style="left:1020px;top:117px;width:14px;height:14px;border:1px solid #dcdcdc;background:#f0f0f0;"></div>
<svg class="a" style="left:1020px;top:117px;" width="14" height="14" viewBox="0 0 14 14"><path d="M4.2 5.2L7.0 2.2L9.8 5.2Z" fill="#606060"/><path d="M4.2 9.0L7.0 12.0L9.8 9.0Z" fill="#606060"/><path d="M1 7.0H13" stroke="#dcdcdc" stroke-width="1"/></svg>
<span class="t" style="left:1037.60px;top:92px;font-size:11px;line-height:15px;color:#757575;transform:scaleX(0.9167);transform-origin:0 0;">Allinea X</span>
<span class="t" style="left:1037.60px;top:118px;font-size:11px;line-height:15px;letter-spacing:-0.427px;color:#757575;">Allinea Y</span>
<div class="a " style="left:1080px;top:88px;width:67px;height:20px;background:#cccccc;border:1px solid #bdbdbd;"></div>
<span class="t" style="left:1083.10px;top:92px;font-size:11px;line-height:15px;letter-spacing:-0.040px;color:#757575;">Centrale</span>
<svg class="a" style="left:1133.6px;top:95.2px;" width="12" height="8" viewBox="0 0 12 8"><path d="M0.6 2L4.8 6L9.0 2" fill="none" stroke="#999" stroke-width="1.1"/></svg>
<div class="a " style="left:1080px;top:114px;width:67px;height:20px;background:#cccccc;border:1px solid #bdbdbd;"></div>
<span class="t" style="left:1083.10px;top:118px;font-size:11px;line-height:15px;letter-spacing:-0.040px;color:#757575;">Centrale</span>
<svg class="a" style="left:1133.6px;top:121.2px;" width="12" height="8" viewBox="0 0 12 8"><path d="M0.6 2L4.8 6L9.0 2" fill="none" stroke="#999" stroke-width="1.1"/></svg>
<div class="a " style="left:1149px;top:88px;width:115px;height:20px;background:#cccccc;border:1px solid #bdbdbd;"></div>
<span class="t" style="left:1152.10px;top:92px;font-size:11px;line-height:15px;letter-spacing:-0.245px;color:#757575;">Normale</span>
<svg class="a" style="left:1250.6px;top:95.2px;" width="12" height="8" viewBox="0 0 12 8"><path d="M0.6 2L4.8 6L9.0 2" fill="none" stroke="#999" stroke-width="1.1"/></svg>
<span class="t" style="left:1148.40px;top:118px;font-size:11px;line-height:15px;letter-spacing:0.471px;color:#757575;">Offset</span>
<div class="a inp" style="left:1187px;top:115px;width:77px;height:18px;"></div>
<span class="t" style="left:1188.90px;top:118px;font-size:11px;line-height:15px;color:#757575;">0</span>
<div class="a " style="left:1248px;top:117px;width:14px;height:14px;border:1px solid #dcdcdc;background:#f0f0f0;"></div>
<svg class="a" style="left:1248px;top:117px;" width="14" height="14" viewBox="0 0 14 14"><path d="M4.2 5.2L7.0 2.2L9.8 5.2Z" fill="#606060"/><path d="M4.2 9.0L7.0 12.0L9.8 9.0Z" fill="#606060"/><path d="M1 7.0H13" stroke="#dcdcdc" stroke-width="1"/></svg>
<div class="a " style="left:1265px;top:83px;width:1px;height:58px;background:#a0a0a0;"></div>
<div class="a " style="left:1266px;top:83px;width:1px;height:58px;background:#fff;"></div>
<svg class="a" style="left:1270px;top:86px;" width="3" height="52" viewBox="0 0 3 52"><rect x="1" y="1" width="1" height="1" fill="#fff"/><rect x="2" y="2" width="1" height="1" fill="#fff"/><rect x="1" y="0" width="1" height="1" fill="#a0a0a0"/><rect x="0" y="1" width="1" height="1" fill="#a0a0a0"/><rect x="1" y="5" width="1" height="1" fill="#fff"/><rect x="2" y="6" width="1" height="1" fill="#fff"/><rect x="1" y="4" width="1" height="1" fill="#a0a0a0"/><rect x="0" y="5" width="1" height="1" fill="#a0a0a0"/><rect x="1" y="9" width="1" height="1" fill="#fff"/><rect x="2" y="10" width="1" height="1" fill="#fff"/><rect x="1" y="8" width="1" height="1" fill="#a0a0a0"/><rect x="0" y="9" width="1" height="1" fill="#a0a0a0"/><rect x="1" y="13" width="1" height="1" fill="#fff"/><rect x="2" y="14" width="1" height="1" fill="#fff"/><rect x="1" y="12" width="1" height="1" fill="#a0a0a0"/><rect x="0" y="13" width="1" height="1" fill="#a0a0a0"/><rect x="1" y="17" width="1" height="1" fill="#fff"/><rect x="2" y="18" width="1" height="1" fill="#fff"/><rect x="1" y="16" width="1" height="1" fill="#a0a0a0"/><rect x="0" y="17" width="1" height="1" fill="#a0a0a0"/><rect x="1" y="21" width="1" height="1" fill="#fff"/><rect x="2" y="22" width="1" height="1" fill="#fff"/><rect x="1" y="20" width="1" height="1" fill="#a0a0a0"/><rect x="0" y="21" width="1" height="1" fill="#a0a0a0"/><rect x="1" y="25" width="1" height="1" fill="#fff"/><rect x="2" y="26" width="1" height="1" fill="#fff"/><rect x="1" y="24" width="1" height="1" fill="#a0a0a0"/><rect x="0" y="25" width="1" height="1" fill="#a0a0a0"/><rect x="1" y="29" width="1" height="1" fill="#fff"/><rect x="2" y="30" width="1" height="1" fill="#fff"/><rect x="1" y="28" width="1" height="1" fill="#a0a0a0"/><rect x="0" y="29" width="1" height="1" fill="#a0a0a0"/><rect x="1" y="33" width="1" height="1" fill="#fff"/><rect x="2" y="34" width="1" height="1" fill="#fff"/><rect x="1" y="32" width="1" height="1" fill="#a0a0a0"/><rect x="0" y="33" width="1" height="1" fill="#a0a0a0"/><rect x="1" y="37" width="1" height="1" fill="#fff"/><rect x="2" y="38" width="1" height="1" fill="#fff"/><rect x="1" y="36" width="1" height="1" fill="#a0a0a0"/><rect x="0" y="37" width="1" height="1" fill="#a0a0a0"/><rect x="1" y="41" width="1" height="1" fill="#fff"/><rect x="2" y="42" width="1" height="1" fill="#fff"/><rect x="1" y="40" width="1" height="1" fill="#a0a0a0"/><rect x="0" y="41" width="1" height="1" fill="#a0a0a0"/><rect x="1" y="45" width="1" height="1" fill="#fff"/><rect x="2" y="46" width="1" height="1" fill="#fff"/><rect x="1" y="44" width="1" height="1" fill="#a0a0a0"/><rect x="0" y="45" width="1" height="1" fill="#a0a0a0"/><rect x="1" y="49" width="1" height="1" fill="#fff"/><rect x="2" y="50" width="1" height="1" fill="#fff"/><rect x="1" y="48" width="1" height="1" fill="#a0a0a0"/><rect x="0" y="49" width="1" height="1" fill="#a0a0a0"/></svg>
<svg class="a" style="left:1262px;top:84px;" width="60" height="56" viewBox="0 0 775 723"><path d="M240 316A112 112 0 0 1 452 298" fill="none" stroke="#000" stroke-width="34"/>
<path d="M204 266L216 360L294 312Z" fill="#000"/>
<path d="M452 376A112 112 0 0 1 240 396" fill="none" stroke="#000" stroke-width="34"/>
<path d="M432 376L498 336L494 428Z" fill="#000"/>
<path d="M308 316L386 304L398 380L320 392Z" fill="#000"/>
<path d="M648 158L690 188L648 218" fill="none" stroke="#000" stroke-width="17"/></svg>
<div class="a " style="left:1315px;top:83px;width:1px;height:58px;background:#a0a0a0;"></div>
<div class="a " style="left:1316px;top:83px;width:1px;height:58px;background:#fff;"></div>
<svg class="a" style="left:1320px;top:86px;" width="3" height="52" viewBox="0 0 3 52"><rect x="1" y="1" width="1" height="1" fill="#fff"/><rect x="2" y="2" width="1" height="1" fill="#fff"/><rect x="1" y="0" width="1" height="1" fill="#a0a0a0"/><rect x="0" y="1" width="1" height="1" fill="#a0a0a0"/><rect x="1" y="5" width="1" height="1" fill="#fff"/><rect x="2" y="6" width="1" height="1" fill="#fff"/><rect x="1" y="4" width="1" height="1" fill="#a0a0a0"/><rect x="0" y="5" width="1" height="1" fill="#a0a0a0"/><rect x="1" y="9" width="1" height="1" fill="#fff"/><rect x="2" y="10" width="1" height="1" fill="#fff"/><rect x="1" y="8" width="1" height="1" fill="#a0a0a0"/><rect x="0" y="9" width="1" height="1" fill="#a0a0a0"/><rect x="1" y="13" width="1" height="1" fill="#fff"/><rect x="2" y="14" width="1" height="1" fill="#fff"/><rect x="1" y="12" width="1" height="1" fill="#a0a0a0"/><rect x="0" y="13" width="1" height="1" fill="#a0a0a0"/><rect x="1" y="17" width="1" height="1" fill="#fff"/><rect x="2" y="18" width="1" height="1" fill="#fff"/><rect x="1" y="16" width="1" height="1" fill="#a0a0a0"/><rect x="0" y="17" width="1" height="1" fill="#a0a0a0"/><rect x="1" y="21" width="1" height="1" fill="#fff"/><rect x="2" y="22" width="1" height="1" fill="#fff"/><rect x="1" y="20" width="1" height="1" fill="#a0a0a0"/><rect x="0" y="21" width="1" height="1" fill="#a0a0a0"/><rect x="1" y="25" width="1" height="1" fill="#fff"/><rect x="2" y="26" width="1" height="1" fill="#fff"/><rect x="1" y="24" width="1" height="1" fill="#a0a0a0"/><rect x="0" y="25" width="1" height="1" fill="#a0a0a0"/><rect x="1" y="29" width="1" height="1" fill="#fff"/><rect x="2" y="30" width="1" height="1" fill="#fff"/><rect x="1" y="28" width="1" height="1" fill="#a0a0a0"/><rect x="0" y="29" width="1" height="1" fill="#a0a0a0"/><rect x="1" y="33" width="1" height="1" fill="#fff"/><rect x="2" y="34" width="1" height="1" fill="#fff"/><rect x="1" y="32" width="1" height="1" fill="#a0a0a0"/><rect x="0" y="33" width="1" height="1" fill="#a0a0a0"/><rect x="1" y="37" width="1" height="1" fill="#fff"/><rect x="2" y="38" width="1" height="1" fill="#fff"/><rect x="1" y="36" width="1" height="1" fill="#a0a0a0"/><rect x="0" y="37" width="1" height="1" fill="#a0a0a0"/><rect x="1" y="41" width="1" height="1" fill="#fff"/><rect x="2" y="42" width="1" height="1" fill="#fff"/><rect x="1" y="40" width="1" height="1" fill="#a0a0a0"/><rect x="0" y="41" width="1" height="1" fill="#a0a0a0"/><rect x="1" y="45" width="1" height="1" fill="#fff"/><rect x="2" y="46" width="1" height="1" fill="#fff"/><rect x="1" y="44" width="1" height="1" fill="#a0a0a0"/><rect x="0" y="45" width="1" height="1" fill="#a0a0a0"/><rect x="1" y="49" width="1" height="1" fill="#fff"/><rect x="2" y="50" width="1" height="1" fill="#fff"/><rect x="1" y="48" width="1" height="1" fill="#a0a0a0"/><rect x="0" y="49" width="1" height="1" fill="#a0a0a0"/></svg>
<svg class="a" style="left:1328px;top:100px;" width="24" height="22" viewBox="0 0 24 22"><rect x="1.500" y="1.800" width="4.200" height="18.600" rx="0.600" fill="#f8f8f8" stroke="#808080" stroke-width="1.300"/>
<path d="M5.800 9.600L7.400 11L5.800 12.400Z" fill="#909090"/><path d="M7 11H10" stroke="#a0a0a0" stroke-width="0.800"/>
<rect x="10.300" y="7.400" width="8" height="7.800" fill="#f6f6f6" stroke="#7a7a7a" stroke-width="1.300"/>
<path d="M18.800 8.400L21.600 9.600L18.800 10.800L21.600 12L18.800 13.200L21.600 14.400" fill="none" stroke="#c0c0c0" stroke-width="0.700"/></svg>
<div class="a " style="left:0px;top:142px;width:59px;height:581px;background:#f0f0f0;"></div>
<div class="a " style="left:59px;top:142px;width:1px;height:581px;background:#a0a0a0;"></div>
<div class="a " style="left:0px;top:142px;width:59px;height:1px;background:#fff;"></div>
<svg class="a" style="left:0px;top:146px;" width="58" height="3" viewBox="0 0 58 3"><rect x="1" y="1" width="1" height="1" fill="#fff"/><rect x="2" y="2" width="1" height="1" fill="#fff"/><rect x="1" y="0" width="1" height="1" fill="#a0a0a0"/><rect x="0" y="1" width="1" height="1" fill="#a0a0a0"/><rect x="5" y="1" width="1" height="1" fill="#fff"/><rect x="6" y="2" width="1" height="1" fill="#fff"/><rect x="5" y="0" width="1" height="1" fill="#a0a0a0"/><rect x="4" y="1" width="1" height="1" fill="#a0a0a0"/><rect x="9" y="1" width="1" height="1" fill="#fff"/><rect x="10" y="2" width="1" height="1" fill="#fff"/><rect x="9" y="0" width="1" height="1" fill="#a0a0a0"/><rect x="8" y="1" width="1" height="1" fill="#a0a0a0"/><rect x="13" y="1" width="1" height="1" fill="#fff"/><rect x="14" y="2" width="1" height="1" fill="#fff"/><rect x="13" y="0" width="1" height="1" fill="#a0a0a0"/><rect x="12" y="1" width="1" height="1" fill="#a0a0a0"/><rect x="17" y="1" width="1" height="1" fill="#fff"/><rect x="18" y="2" width="1" height="1" fill="#fff"/><rect x="17" y="0" width="1" height="1" fill="#a0a0a0"/><rect x="16" y="1" width="1" height="1" fill="#a0a0a0"/><rect x="21" y="1" width="1" height="1" fill="#fff"/><rect x="22" y="2" width="1" height="1" fill="#fff"/><rect x="21" y="0" width="1" height="1" fill="#a0a0a0"/><rect x="20" y="1" width="1" height="1" fill="#a0a0a0"/><rect x="25" y="1" width="1" height="1" fill="#fff"/><rect x="26" y="2" width="1" height="1" fill="#fff"/><rect x="25" y="0" width="1" height="1" fill="#a0a0a0"/><rect x="24" y="1" width="1" height="1" fill="#a0a0a0"/><rect x="29" y="1" width="1" height="1" fill="#fff"/><rect x="30" y="2" width="1" height="1" fill="#fff"/><rect x="29" y="0" width="1" height="1" fill="#a0a0a0"/><rect x="28" y="1" width="1" height="1" fill="#a0a0a0"/><rect x="33" y="1" width="1" height="1" fill="#fff"/><rect x="34" y="2" width="1" height="1" fill="#fff"/><rect x="33" y="0" width="1" height="1" fill="#a0a0a0"/><rect x="32" y="1" width="1" height="1" fill="#a0a0a0"/><rect x="37" y="1" width="1" height="1" fill="#fff"/><rect x="38" y="2" width="1" height="1" fill="#fff"/><rect x="37" y="0" width="1" height="1" fill="#a0a0a0"/><rect x="36" y="1" width="1" height="1" fill="#a0a0a0"/><rect x="41" y="1" width="1" height="1" fill="#fff"/><rect x="42" y="2" width="1" height="1" fill="#fff"/><rect x="41" y="0" width="1" height="1" fill="#a0a0a0"/><rect x="40" y="1" width="1" height="1" fill="#a0a0a0"/><rect x="45" y="1" width="1" height="1" fill="#fff"/><rect x="46" y="2" width="1" height="1" fill="#fff"/><rect x="45" y="0" width="1" height="1" fill="#a0a0a0"/><rect x="44" y="1" width="1" height="1" fill="#a0a0a0"/><rect x="49" y="1" width="1" height="1" fill="#fff"/><rect x="50" y="2" width="1" height="1" fill="#fff"/><rect x="49" y="0" width="1" height="1" fill="#a0a0a0"/><rect x="48" y="1" width="1" height="1" fill="#a0a0a0"/><rect x="53" y="1" width="1" height="1" fill="#fff"/><rect x="54" y="2" width="1" height="1" fill="#fff"/><rect x="53" y="0" width="1" height="1" fill="#a0a0a0"/><rect x="52" y="1" width="1" height="1" fill="#a0a0a0"/><rect x="57" y="1" width="1" height="1" fill="#fff"/><rect x="58" y="2" width="1" height="1" fill="#fff"/><rect x="57" y="0" width="1" height="1" fill="#a0a0a0"/><rect x="56" y="1" width="1" height="1" fill="#a0a0a0"/></svg>
<div class="a " style="left:15px;top:152px;width:26px;height:23px;background:#c6dff5;border:1px solid #90c8f6;"></div>
<svg class="a" style="left:10px;top:150px;" width="40" height="50" viewBox="0 0 578 723"><path d="M178 82L195 320L250 255L300 345L350 320L305 235L370 215Z" fill="none" stroke="#000" stroke-width="22" stroke-linejoin="round"/>
<path d="M270 428Q290 392 328 410Q360 428 342 462L336 474L262 442Z" fill="#000"/>
<path d="M256 456L330 488L260 628L186 594Z" fill="#000"/>
<path d="M183 606L254 638L182 692L166 686Z" fill="#fff" stroke="#000" stroke-width="9" stroke-linejoin="round"/>
<path d="M164 688L184 694L196 672L172 662Z" fill="#000"/></svg>
<svg class="a" style="left:16px;top:200px;" width="24" height="24" viewBox="0 0 24 24"><rect x="3.200" y="3.200" width="17.600" height="17.600" fill="none" stroke="#000" stroke-width="2.400"/></svg>
<svg class="a" style="left:16px;top:224px;" width="24" height="24" viewBox="0 0 24 24"><circle cx="12" cy="12" r="8.600" fill="none" stroke="#000" stroke-width="2.400"/></svg>
<svg class="a" style="left:16px;top:248px;" width="24" height="24" viewBox="0 0 24 24"><polygon points="21.60,12.00 16.80,20.31 7.20,20.31 2.40,12.00 7.20,3.69 16.80,3.69" fill="none" stroke="#000" stroke-width="2.400" stroke-linejoin="miter"/></svg>
<svg class="a" style="left:16px;top:272.5px;" width="24" height="24" viewBox="0 0 24 24"><path d="M2.9 5.6L10.1 2.0L17.7 4.7L21.3 13.2L15.5 20.4L2.9 20.4Z" fill="none" stroke="#000" stroke-width="1.700" stroke-linejoin="round"/><circle cx="2.9" cy="5.6" r="1.300" fill="#000"/><circle cx="10.1" cy="2.0" r="1.300" fill="#000"/><circle cx="17.7" cy="4.7" r="1.300" fill="#000"/><circle cx="21.3" cy="13.2" r="1.300" fill="#000"/><circle cx="15.5" cy="20.4" r="1.300" fill="#000"/><circle cx="2.9" cy="20.4" r="1.300" fill="#000"/></svg>
<svg class="a" style="left:16px;top:296px;" width="24" height="24" viewBox="0 0 24 24"><path d="M2.900 3.300H20.900" stroke="#000" stroke-width="1.500"/><path d="M3.500 7.600V20.300H10.200M13.800 20.300H20.500V7.600" fill="none" stroke="#000" stroke-width="1.700"/></svg>
<svg class="a" style="left:16px;top:320px;" width="24" height="24" viewBox="0 0 24 24"><path fill-rule="evenodd" d="M5.300 18.600L10.300 5H14.200L19.200 18.600H15.700L14.800 15.700H9.700L8.800 18.600ZM10.500 13.100H14L12.250 7.600Z" fill="#000"/></svg>
<svg class="a" style="left:16px;top:344px;" width="24" height="24" viewBox="0 0 24 24"><path d="M12.200 2.600C8 2.600 5.200 5.600 5.200 9.400C5.200 13.400 9.600 17.800 12.200 21.800C14.800 17.800 19.200 13.400 19.200 9.400C19.200 5.600 16.400 2.600 12.200 2.600Z" fill="#000"/><circle cx="12.200" cy="8.800" r="2.500" fill="#f0f0f0"/></svg>
<svg class="a" style="left:16px;top:368px;" width="24" height="24" viewBox="0 0 24 24"><g transform="rotate(-45.500 12 12)"><rect x="0.800" y="9.300" width="22.600" height="5.200" fill="#f0f0f0" stroke="#000" stroke-width="1.400"/>
<path d="M4 9.400V11.800M7 9.400V11.200M10 9.400V11.800M13 9.400V11.200M16 9.400V11.800M19 9.400V11.200" stroke="#000" stroke-width="1"/></g></svg>
<div class="a " style="left:0px;top:393px;width:59px;height:1px;background:#a0a0a0;"></div>
<div class="a " style="left:0px;top:394px;width:59px;height:1px;background:#fff;"></div>
<svg class="a" style="left:0px;top:398px;" width="58" height="3" viewBox="0 0 58 3"><rect x="1" y="1" width="1" height="1" fill="#fff"/><rect x="2" y="2" width="1" height="1" fill="#fff"/><rect x="1" y="0" width="1" height="1" fill="#a0a0a0"/><rect x="0" y="1" width="1" height="1" fill="#a0a0a0"/><rect x="5" y="1" width="1" height="1" fill="#fff"/><rect x="6" y="2" width="1" height="1" fill="#fff"/><rect x="5" y="0" width="1" height="1" fill="#a0a0a0"/><rect x="4" y="1" width="1" height="1" fill="#a0a0a0"/><rect x="9" y="1" width="1" height="1" fill="#fff"/><rect x="10" y="2" width="1" height="1" fill="#fff"/><rect x="9" y="0" width="1" height="1" fill="#a0a0a0"/><rect x="8" y="1" width="1" height="1" fill="#a0a0a0"/><rect x="13" y="1" width="1" height="1" fill="#fff"/><rect x="14" y="2" width="1" height="1" fill="#fff"/><rect x="13" y="0" width="1" height="1" fill="#a0a0a0"/><rect x="12" y="1" width="1" height="1" fill="#a0a0a0"/><rect x="17" y="1" width="1" height="1" fill="#fff"/><rect x="18" y="2" width="1" height="1" fill="#fff"/><rect x="17" y="0" width="1" height="1" fill="#a0a0a0"/><rect x="16" y="1" width="1" height="1" fill="#a0a0a0"/><rect x="21" y="1" width="1" height="1" fill="#fff"/><rect x="22" y="2" width="1" height="1" fill="#fff"/><rect x="21" y="0" width="1" height="1" fill="#a0a0a0"/><rect x="20" y="1" width="1" height="1" fill="#a0a0a0"/><rect x="25" y="1" width="1" height="1" fill="#fff"/><rect x="26" y="2" width="1" height="1" fill="#fff"/><rect x="25" y="0" width="1" height="1" fill="#a0a0a0"/><rect x="24" y="1" width="1" height="1" fill="#a0a0a0"/><rect x="29" y="1" width="1" height="1" fill="#fff"/><rect x="30" y="2" width="1" height="1" fill="#fff"/><rect x="29" y="0" width="1" height="1" fill="#a0a0a0"/><rect x="28" y="1" width="1" height="1" fill="#a0a0a0"/><rect x="33" y="1" width="1" height="1" fill="#fff"/><rect x="34" y="2" width="1" height="1" fill="#fff"/><rect x="33" y="0" width="1" height="1" fill="#a0a0a0"/><rect x="32" y="1" width="1" height="1" fill="#a0a0a0"/><rect x="37" y="1" width="1" height="1" fill="#fff"/><rect x="38" y="2" width="1" height="1" fill="#fff"/><rect x="37" y="0" width="1" height="1" fill="#a0a0a0"/><rect x="36" y="1" width="1" height="1" fill="#a0a0a0"/><rect x="41" y="1" width="1" height="1" fill="#fff"/><rect x="42" y="2" width="1" height="1" fill="#fff"/><rect x="41" y="0" width="1" height="1" fill="#a0a0a0"/><rect x="40" y="1" width="1" height="1" fill="#a0a0a0"/><rect x="45" y="1" width="1" height="1" fill="#fff"/><rect x="46" y="2" width="1" height="1" fill="#fff"/><rect x="45" y="0" width="1" height="1" fill="#a0a0a0"/><rect x="44" y="1" width="1" height="1" fill="#a0a0a0"/><rect x="49" y="1" width="1" height="1" fill="#fff"/><rect x="50" y="2" width="1" height="1" fill="#fff"/><rect x="49" y="0" width="1" height="1" fill="#a0a0a0"/><rect x="48" y="1" width="1" height="1" fill="#a0a0a0"/><rect x="53" y="1" width="1" height="1" fill="#fff"/><rect x="54" y="2" width="1" height="1" fill="#fff"/><rect x="53" y="0" width="1" height="1" fill="#a0a0a0"/><rect x="52" y="1" width="1" height="1" fill="#a0a0a0"/><rect x="57" y="1" width="1" height="1" fill="#fff"/><rect x="58" y="2" width="1" height="1" fill="#fff"/><rect x="57" y="0" width="1" height="1" fill="#a0a0a0"/><rect x="56" y="1" width="1" height="1" fill="#a0a0a0"/></svg>
<svg class="a" style="left:16px;top:404px;" width="24" height="24" viewBox="0 0 24 24"><ellipse cx="12.100" cy="12.100" rx="8.700" ry="9.700" fill="none" stroke="#777" stroke-width="0.900"/>
<ellipse cx="12.100" cy="12.100" rx="6.500" ry="7.800" fill="none" stroke="#555" stroke-width="2.200"/>
<ellipse cx="12.100" cy="12.100" rx="4.200" ry="5.300" fill="none" stroke="#888" stroke-width="0.700"/></svg>
<div class="a " style="left:1px;top:430px;width:55px;height:1px;background:#d0d0d0;"></div>
<svg class="a" style="left:16px;top:433.7px;" width="24" height="24" viewBox="0 0 24 24"><path d="M10 5.500V14.700H18.900M10 5.500H14.400V17.700H7.300V9.400H18.900V14.700" fill="none" stroke="#8a8a8a" stroke-width="0.700"/>
<path d="M10 2.500H21.600V14.700H18.900V21.500H7.300V17.700H3.400V5.500H10Z" fill="none" stroke="#555" stroke-width="1.500"/></svg>
<svg class="a" style="left:16px;top:458.6px;" width="24" height="24" viewBox="0 0 24 24"><path d="M7.300 7.200H16.700V16.600H7.300Z" fill="none" stroke="#777" stroke-width="0.800" stroke-dasharray="1.800 1"/>
<path d="M2.600 2.200H16.700V7.200H21.600V21.600H7.300V16.600H2.600Z" fill="none" stroke="#555" stroke-width="1.700"/></svg>
<svg class="a" style="left:16px;top:482.8px;" width="24" height="24" viewBox="0 0 24 24"><path d="M17.200 7.400H21.600V21.400H7.800V16.800M17.200 7.400V16.800H7.800" fill="none" stroke="#777" stroke-width="0.800" stroke-dasharray="1.800 1"/>
<path d="M2.600 2.400H17.200V7.400H7.800V16.800H2.600Z" fill="none" stroke="#555" stroke-width="1.800"/></svg>
<svg class="a" style="left:16px;top:506.6px;" width="24" height="24" viewBox="0 0 24 24"><path d="M2.300 2H16.700V16.200H2.300Z" fill="none" stroke="#777" stroke-width="0.800" stroke-dasharray="1.800 1"/>
<path d="M7.800 7.600H21.600V21.200H7.800Z" fill="none" stroke="#777" stroke-width="0.800" stroke-dasharray="1.800 1"/>
<rect x="7.600" y="7.400" width="9.200" height="9.200" fill="#f0f0f0" stroke="#555" stroke-width="1.800"/></svg>
<div class="a " style="left:1px;top:532px;width:55px;height:1px;background:#d0d0d0;"></div>
<svg class="a" style="left:16px;top:536px;" width="24" height="24" viewBox="0 0 24 24"><rect x="2.30" y="2.20" width="4.800" height="4.500" fill="#555"/><rect x="9.65" y="2.20" width="4.800" height="4.500" fill="#555"/><rect x="17.00" y="2.20" width="4.800" height="4.500" fill="#555"/><rect x="2.30" y="9.65" width="4.800" height="4.500" fill="#555"/><rect x="9.65" y="9.65" width="4.800" height="4.500" fill="#555"/><rect x="17.00" y="9.65" width="4.800" height="4.500" fill="#555"/><rect x="2.30" y="17.10" width="4.800" height="4.500" fill="#555"/><rect x="9.65" y="17.10" width="4.800" height="4.500" fill="#555"/><rect x="17.00" y="17.10" width="4.800" height="4.500" fill="#555"/></svg>
<svg class="a" style="left:16px;top:560px;" width="24" height="24" viewBox="0 0 24 24"><rect x="10.20" y="2.50" width="4" height="4" fill="#555" stroke="#6a6a6a" stroke-width="0.900" transform="rotate(0 12.20 4.50)"/><rect x="15.64" y="4.76" width="4" height="4" fill="#fff" stroke="#6a6a6a" stroke-width="0.900" transform="rotate(45 17.64 6.76)"/><rect x="17.90" y="10.20" width="4" height="4" fill="#fff" stroke="#6a6a6a" stroke-width="0.900" transform="rotate(90 19.90 12.20)"/><rect x="15.64" y="15.64" width="4" height="4" fill="#fff" stroke="#6a6a6a" stroke-width="0.900" transform="rotate(135 17.64 17.64)"/><rect x="10.20" y="17.90" width="4" height="4" fill="#fff" stroke="#6a6a6a" stroke-width="0.900" transform="rotate(180 12.20 19.90)"/><rect x="4.76" y="15.64" width="4" height="4" fill="#fff" stroke="#6a6a6a" stroke-width="0.900" transform="rotate(225 6.76 17.64)"/><rect x="2.50" y="10.20" width="4" height="4" fill="#fff" stroke="#6a6a6a" stroke-width="0.900" transform="rotate(270 4.50 12.20)"/><rect x="4.76" y="4.76" width="4" height="4" fill="#fff" stroke="#6a6a6a" stroke-width="0.900" transform="rotate(315 6.76 6.76)"/></svg>
<div class="a " style="left:1px;top:586px;width:55px;height:1px;background:#d0d0d0;"></div>
<svg class="a" style="left:16px;top:590px;" width="24" height="24" viewBox="0 0 24 24"><path d="M3.1 7.5L10.6 4.5L17.2 5.8L20.5 13.3L15.2 20.4L3.1 20.4Z" fill="none" stroke="#8a8a8a" stroke-width="1.500" stroke-linejoin="round"/><circle cx="3.1" cy="7.5" r="1.100" fill="#8a8a8a"/><circle cx="10.6" cy="4.5" r="1.100" fill="#8a8a8a"/><circle cx="17.2" cy="5.8" r="1.100" fill="#8a8a8a"/><circle cx="20.5" cy="13.3" r="1.100" fill="#8a8a8a"/><circle cx="15.2" cy="20.4" r="1.100" fill="#8a8a8a"/><circle cx="3.1" cy="20.4" r="1.100" fill="#8a8a8a"/>
<path d="M8 3.600Q11.600 2.600 14.600 4.800" fill="none" stroke="#000" stroke-width="1.500"/><path d="M13.800 2.200L17.600 6.200L12.400 6.400Z" fill="#000"/></svg>
<svg class="a" style="left:16px;top:614px;" width="24" height="24" viewBox="0 0 24 24"><path d="M3 20.800V14.400Q3 3.400 14 3.400H21.400" fill="none" stroke="#000" stroke-width="1.900"/>
<path d="M21.200 3.400V20.600H3" fill="none" stroke="#000" stroke-width="1.100" stroke-dasharray="2.400 1.400"/></svg>
<span class="t" style="left:8.70px;top:638px;font-size:11px;line-height:15px;letter-spacing:-0.150px;color:#757575;">Radius:</span>
<div class="a inp" style="left:-1px;top:652px;width:59px;height:17px;"></div>
<span class="t" style="left:8.10px;top:654px;font-size:11px;line-height:15px;letter-spacing:-0.003px;color:#757575;">10.0</span>
<div class="a " style="left:42px;top:653px;width:14px;height:15px;border:1px solid #dcdcdc;background:#f0f0f0;"></div>
<svg class="a" style="left:42px;top:653px;" width="14" height="15" viewBox="0 0 14 15"><path d="M4.2 5.7L7.0 2.7L9.8 5.7Z" fill="#606060"/><path d="M4.2 9.5L7.0 12.5L9.8 9.5Z" fill="#606060"/><path d="M1 7.5H13" stroke="#dcdcdc" stroke-width="1"/></svg>
<div class="a " style="left:60px;top:142px;width:3px;height:581px;background:#f4f4f4;"></div>
<div class="a " style="left:63px;top:142px;width:868px;height:581px;background:#f8f8f8;"></div>
<div class="a" style="left:63px;top:142px;width:868px;height:581px;">
<span class="t" style="left:-7.91px;top:7.90px;font-size:12px;line-height:16px;letter-spacing:0.477px;color:#808080">-1280</span>
<span class="t" style="left:66.57px;top:7.90px;font-size:12px;line-height:16px;letter-spacing:0.544px;color:#808080">-960</span>
<span class="t" style="left:137.57px;top:7.90px;font-size:12px;line-height:16px;letter-spacing:0.544px;color:#808080">-640</span>
<span class="t" style="left:208.57px;top:7.90px;font-size:12px;line-height:16px;letter-spacing:0.544px;color:#808080">-320</span>
<span class="t" style="left:288.92px;top:7.90px;font-size:12px;line-height:16px;letter-spacing:0.000px;color:#808080">0</span>
<span class="t" style="left:352.98px;top:7.90px;font-size:12px;line-height:16px;letter-spacing:0.414px;color:#808080">320</span>
<span class="t" style="left:423.98px;top:7.90px;font-size:12px;line-height:16px;letter-spacing:0.414px;color:#808080">640</span>
<span class="t" style="left:494.98px;top:7.90px;font-size:12px;line-height:16px;letter-spacing:0.414px;color:#808080">960</span>
<span class="t" style="left:562.51px;top:7.90px;font-size:12px;line-height:16px;letter-spacing:0.368px;color:#808080">1280</span>
<span class="t" style="left:633.51px;top:7.90px;font-size:12px;line-height:16px;letter-spacing:0.368px;color:#808080">1600</span>
<span class="t" style="left:704.51px;top:7.90px;font-size:12px;line-height:16px;letter-spacing:0.368px;color:#808080">1920</span>
<span class="t" style="left:775.51px;top:7.90px;font-size:12px;line-height:16px;letter-spacing:0.368px;color:#808080">2240</span>
<span class="t" style="left:846.51px;top:7.90px;font-size:12px;line-height:16px;letter-spacing:0.368px;color:#808080">2560</span>
</div>
<span class="t" style="left:66.40px;top:142px;font-size:12px;line-height:16px;letter-spacing:0.702px;color:#808080;">1920</span>
<span class="t" style="left:898.20px;top:142px;font-size:12px;line-height:16px;letter-spacing:0.702px;color:#808080;">1920</span>
<span class="t" style="left:66.40px;top:213px;font-size:12px;line-height:16px;letter-spacing:0.702px;color:#808080;">1600</span>
<span class="t" style="left:898.20px;top:213px;font-size:12px;line-height:16px;letter-spacing:0.702px;color:#808080;">1600</span>
<span class="t" style="left:66.40px;top:284px;font-size:12px;line-height:16px;letter-spacing:0.702px;color:#808080;">1280</span>
<span class="t" style="left:898.20px;top:284px;font-size:12px;line-height:16px;letter-spacing:0.702px;color:#808080;">1280</span>
<span class="t" style="left:66.40px;top:354px;font-size:12px;line-height:16px;letter-spacing:0.414px;color:#808080;">960</span>
<span class="t" style="left:906.15px;top:354px;font-size:12px;line-height:16px;letter-spacing:0.414px;color:#808080;">960</span>
<span class="t" style="left:66.40px;top:425px;font-size:12px;line-height:16px;letter-spacing:0.414px;color:#808080;">640</span>
<span class="t" style="left:906.15px;top:425px;font-size:12px;line-height:16px;letter-spacing:0.414px;color:#808080;">640</span>
<span class="t" style="left:66.40px;top:496px;font-size:12px;line-height:16px;letter-spacing:0.414px;color:#808080;">320</span>
<span class="t" style="left:906.15px;top:496px;font-size:12px;line-height:16px;letter-spacing:0.414px;color:#808080;">320</span>
<span class="t" style="left:66.40px;top:567px;font-size:12px;line-height:16px;color:#808080;">0</span>
<span class="t" style="left:920.33px;top:567px;font-size:12px;line-height:16px;color:#808080;">0</span>
<span class="t" style="left:66.40px;top:638px;font-size:12px;line-height:16px;letter-spacing:0.877px;color:#808080;">-320</span>
<span class="t" style="left:900.35px;top:638px;font-size:12px;line-height:16px;letter-spacing:0.877px;color:#808080;">-320</span>
<span class="t" style="left:66.40px;top:709px;font-size:12px;line-height:16px;letter-spacing:0.877px;color:#808080;">-640</span>
<span class="t" style="left:900.35px;top:709px;font-size:12px;line-height:16px;letter-spacing:0.877px;color:#808080;">-640</span>
<div class="a " style="left:355px;top:374px;width:289px;height:201px;border:1px solid #000;background:#fbfbfb;"></div>
<svg class="a" style="left:356px;top:375px;" width="287" height="199" viewBox="0 0 287 199"><path d="M1.5 0V199M3.5 0V199M6.5 0V199M8.5 0V199M10.5 0V199M12.5 0V199M14.5 0V199M17.5 0V199M19.5 0V199M21.5 0V199M23.5 0V199M26.5 0V199M28.5 0V199M30.5 0V199M32.5 0V199M34.5 0V199M37.5 0V199M39.5 0V199M41.5 0V199M43.5 0V199M45.5 0V199M48.5 0V199M50.5 0V199M52.5 0V199M54.5 0V199M57.5 0V199M59.5 0V199M61.5 0V199M63.5 0V199M65.5 0V199M68.5 0V199M70.5 0V199M72.5 0V199M74.5 0V199M77.5 0V199M79.5 0V199M81.5 0V199M83.5 0V199M85.5 0V199M88.5 0V199M90.5 0V199M92.5 0V199M94.5 0V199M97.5 0V199M99.5 0V199M101.5 0V199M103.5 0V199M105.5 0V199M108.5 0V199M110.5 0V199M112.5 0V199M114.5 0V199M116.5 0V199M119.5 0V199M121.5 0V199M123.5 0V199M125.5 0V199M128.5 0V199M130.5 0V199M132.5 0V199M134.5 0V199M136.5 0V199M139.5 0V199M141.5 0V199M143.5 0V199M145.5 0V199M148.5 0V199M150.5 0V199M152.5 0V199M154.5 0V199M156.5 0V199M159.5 0V199M161.5 0V199M163.5 0V199M165.5 0V199M168.5 0V199M170.5 0V199M172.5 0V199M174.5 0V199M176.5 0V199M179.5 0V199M181.5 0V199M183.5 0V199M185.5 0V199M187.5 0V199M190.5 0V199M192.5 0V199M194.5 0V199M196.5 0V199M199.5 0V199M201.5 0V199M203.5 0V199M205.5 0V199M207.5 0V199M210.5 0V199M212.5 0V199M214.5 0V199M216.5 0V199M219.5 0V199M221.5 0V199M223.5 0V199M225.5 0V199M227.5 0V199M230.5 0V199M232.5 0V199M234.5 0V199M236.5 0V199M239.5 0V199M241.5 0V199M243.5 0V199M245.5 0V199M247.5 0V199M250.5 0V199M252.5 0V199M254.5 0V199M256.5 0V199M258.5 0V199M261.5 0V199M263.5 0V199M265.5 0V199M267.5 0V199M270.5 0V199M272.5 0V199M274.5 0V199M276.5 0V199M278.5 0V199M281.5 0V199M283.5 0V199M285.5 0V199M0 197.5H287M0 194.5H287M0 192.5H287M0 190.5H287M0 188.5H287M0 185.5H287M0 183.5H287M0 181.5H287M0 179.5H287M0 177.5H287M0 174.5H287M0 172.5H287M0 170.5H287M0 168.5H287M0 166.5H287M0 163.5H287M0 161.5H287M0 159.5H287M0 157.5H287M0 154.5H287M0 152.5H287M0 150.5H287M0 148.5H287M0 146.5H287M0 143.5H287M0 141.5H287M0 139.5H287M0 137.5H287M0 134.5H287M0 132.5H287M0 130.5H287M0 128.5H287M0 126.5H287M0 123.5H287M0 121.5H287M0 119.5H287M0 117.5H287M0 114.5H287M0 112.5H287M0 110.5H287M0 108.5H287M0 106.5H287M0 103.5H287M0 101.5H287M0 99.5H287M0 97.5H287M0 95.5H287M0 92.5H287M0 90.5H287M0 88.5H287M0 86.5H287M0 83.5H287M0 81.5H287M0 79.5H287M0 77.5H287M0 75.5H287M0 72.5H287M0 70.5H287M0 68.5H287M0 66.5H287M0 63.5H287M0 61.5H287M0 59.5H287M0 57.5H287M0 55.5H287M0 52.5H287M0 50.5H287M0 48.5H287M0 46.5H287M0 43.5H287M0 41.5H287M0 39.5H287M0 37.5H287M0 35.5H287M0 32.5H287M0 30.5H287M0 28.5H287M0 26.5H287M0 24.5H287M0 21.5H287M0 19.5H287M0 17.5H287M0 15.5H287M0 12.5H287M0 10.5H287M0 8.5H287M0 6.5H287M0 4.5H287M0 1.5H287" stroke="#e0e0e0" stroke-width="1" fill="none" shape-rendering="crispEdges"/></svg>
<div class="a " style="left:355px;top:568px;width:7px;height:7px;background:#a01818;border:1px solid #7a1010;"></div>
<div class="a " style="left:351px;top:570px;width:9px;height:9px;background:rgba(110,215,110,0.85);border:1px solid #3f8f3f;"></div>
<span class="t" style="left:347.00px;top:538px;font-size:11px;line-height:15px;color:#8a6a6a;">Y</span>
<span class="t" style="left:379.40px;top:573px;font-size:11px;line-height:15px;color:#8a6a7a;">X</span>
<div class="a " style="left:501px;top:621px;width:12px;height:9px;border:1px solid #000;"></div>
<svg class="a" style="left:440px;top:658px;" width="28" height="28" viewBox="0 0 28 28"><path d="M1 13.500H7.500M19.300 13.500H25.800M13.400 0.800V7.200M13.400 18.900V25.700" stroke="#8a8a8a" stroke-width="1"/>
<rect x="11" y="11" width="5" height="5" fill="#e86a6a" stroke="#d09090" stroke-width="0.600"/></svg>
<div class="a " style="left:931px;top:142px;width:7px;height:581px;background:#f0f0f0;"></div>
<div class="a " style="left:938px;top:142px;width:416px;height:22px;background:linear-gradient(to right,#000 0%,#0a0202 3%,#3a1010 25%,#8a2424 50%,#c03030 61%,#c84c30 80%,#e07a38 100%);"></div>
<span class="t" style="left:943.70px;top:146px;font-size:12px;line-height:16px;letter-spacing:0.015px;color:#fff;">Consolle</span>
<svg class="a" style="left:1328px;top:147.4px;" width="11" height="11" viewBox="0 0 11 11"><path d="M3.600 3V1.200H9.600V6.600H7.400" fill="none" stroke="#3a2420" stroke-width="1.300"/><rect x="1.400" y="3.800" width="6" height="5.400" fill="none" stroke="#3a2420" stroke-width="1.300"/></svg>
<svg class="a" style="left:1349px;top:148.4px;" width="10" height="10" viewBox="0 0 10 10"><path d="M1.400 1.400L8.600 8.600M8.600 1.400L1.400 8.600" stroke="#3a2420" stroke-width="1.500"/></svg>
<div class="a " style="left:940px;top:166px;width:414px;height:204px;background:#fff;border:1px solid #828282;border-right:none;"></div>
<div class="a" style="left:941px;top:167px;width:406px;height:202px;">
<span class="t" style="left:3.8px;top:-0.30px;font-size:11px;line-height:15px;letter-spacing:-0.053px;color:#8b0000;">come 1.5 * max_travel nelle fasi di ricerca e 5 * pulloff nelle fasi di individuazione.</span>
<span class="t" style="left:3.8px;top:12.70px;font-size:11px;line-height:15px;letter-spacing:-0.618px;">ok</span>
<span class="t" style="left:3.8px;top:25.70px;font-size:11px;line-height:15px;letter-spacing:0.023px;">Grbl 1.1h [&#x27;$&#x27; for help]</span>
<span class="t" style="left:3.8px;top:38.70px;font-size:11px;line-height:15px;letter-spacing:-0.318px;">[MSG:Check limits]</span>
<span class="t" style="left:3.8px;top:51.70px;font-size:11px;line-height:15px;letter-spacing:-0.162px;">[MSG:&#x27;$H&#x27;|&#x27;$X&#x27; to unlock]</span>
<span class="t" style="left:3.8px;top:64.70px;font-size:11px;line-height:15px;letter-spacing:-0.200px;">[MSG:Caution: Unlocked]</span>
<span class="t" style="left:3.8px;top:77.70px;font-size:11px;line-height:15px;letter-spacing:-0.618px;">ok</span>
<span class="t" style="left:3.8px;top:90.70px;font-size:11px;line-height:15px;letter-spacing:0.129px;">&lt;Idle|MPos:440.000,-440.000,0.000|FS:0,0|Pn:PX|WCO:0.000,0.000,0.000&gt;</span>
<span class="t" style="left:3.8px;top:103.70px;font-size:11px;line-height:15px;letter-spacing:-0.618px;">ok</span>
<span class="t" style="left:3.8px;top:116.70px;font-size:11px;line-height:15px;letter-spacing:-0.040px;">Avvio streaming</span>
<span class="t" style="left:3.8px;top:129.70px;font-size:11px;line-height:15px;letter-spacing:-0.333px;">[MSG:Program End]</span>
<span class="t" style="left:3.8px;top:142.70px;font-size:11px;line-height:15px;letter-spacing:-0.073px;">Streaming completato in 0:00</span>
<span class="t" style="left:3.8px;top:155.70px;font-size:11px;line-height:15px;letter-spacing:0.129px;">&lt;Idle|MPos:440.000,-430.000,0.000|FS:0,0|Pn:PX|WCO:0.000,0.000,0.000&gt;</span>
<span class="t" style="left:3.8px;top:168.70px;font-size:11px;line-height:15px;letter-spacing:-0.618px;">ok</span>
<span class="t" style="left:3.8px;top:181.70px;font-size:11px;line-height:15px;letter-spacing:-0.040px;">Avvio streaming</span>
<span class="t" style="left:3.8px;top:194.70px;font-size:11px;line-height:15px;letter-spacing:-0.333px;">[MSG:Program End]</span>
</div>
<div class="a " style="left:1347px;top:167px;width:7px;height:202px;background:#f0f0f0;"></div>
<div class="a " style="left:1347px;top:207px;width:7px;height:35px;background:#cdcdcd;"></div>
<svg class="a" style="left:1347px;top:171px;" width="7" height="10" viewBox="0 0 7 10"><path d="M3.500 6.500L7.500 2.500" stroke="#606060" stroke-width="1.400" fill="none"/></svg>
<svg class="a" style="left:1347px;top:354px;" width="7" height="10" viewBox="0 0 7 10"><path d="M3.500 3.500L7.500 7.500" stroke="#606060" stroke-width="1.400" fill="none"/></svg>
<div class="a " style="left:940px;top:372px;width:338px;height:20px;background:#fff;border:1px solid #7a7a7a;"></div>
<span class="t" style="left:942.00px;top:376px;font-size:11px;line-height:15px;letter-spacing:-0.138px;color:#8c8c8c;">(digita i comandi qui)</span>
<span class="t" style="left:1281.10px;top:376px;font-size:11px;line-height:15px;letter-spacing:0.202px;">Mostra tutto</span>
<div class="a btn" style="left:941px;top:395px;width:137px;height:21px;"></div>
<span class="t" style="left:991.55px;top:399px;font-size:11px;line-height:15px;letter-spacing:-0.156px;">Macro0</span>
<div class="a btn" style="left:1082px;top:395px;width:138px;height:21px;"></div>
<span class="t" style="left:1133.05px;top:399px;font-size:11px;line-height:15px;letter-spacing:-0.156px;">Macro1</span>
<div class="a btn" style="left:1224px;top:395px;width:138px;height:21px;"></div>
<span class="t" style="left:1275.05px;top:399px;font-size:11px;line-height:15px;letter-spacing:-0.156px;">Macro2</span>
<div class="a btn" style="left:941px;top:420px;width:137px;height:21px;"></div>
<span class="t" style="left:991.55px;top:424px;font-size:11px;line-height:15px;letter-spacing:-0.156px;">Macro3</span>
<div class="a btn" style="left:1082px;top:420px;width:138px;height:21px;"></div>
<span class="t" style="left:1133.05px;top:424px;font-size:11px;line-height:15px;letter-spacing:-0.156px;">Macro4</span>
<div class="a btn" style="left:1224px;top:420px;width:138px;height:21px;"></div>
<span class="t" style="left:1275.05px;top:424px;font-size:11px;line-height:15px;letter-spacing:-0.156px;">Macro5</span>
<div class="a " style="left:938px;top:444px;width:416px;height:1px;background:#d9d9d9;"></div>
<div class="a " style="left:940px;top:445px;width:79px;height:17px;background:#f0f0f0;border:1px solid #d9d9d9;border-top:none;"></div>
<span class="t" style="left:948.70px;top:447px;font-size:11px;line-height:15px;letter-spacing:-0.079px;">Tagli / Livelli</span>
<div class="a " style="left:1018px;top:445px;width:57px;height:17px;background:#f0f0f0;border:1px solid #d9d9d9;border-top:none;"></div>
<span class="t" style="left:1030.00px;top:447px;font-size:11px;line-height:15px;letter-spacing:-0.149px;">Sposta</span>
<div class="a " style="left:1074px;top:444px;width:66px;height:21px;background:#fff;border:1px solid #d9d9d9;border-top:none;"></div>
<span class="t" style="left:1087.00px;top:448px;font-size:11px;line-height:15px;letter-spacing:-0.343px;">Consolle</span>
<div class="a " style="left:938px;top:469px;width:416px;height:22px;background:linear-gradient(to right,#000 0%,#0a0202 3%,#3a1010 25%,#8a2424 50%,#c03030 61%,#c84c30 80%,#e07a38 100%);"></div>
<span class="t" style="left:943.70px;top:473px;font-size:12px;line-height:16px;color:#fff;transform:scaleX(0.9195);transform-origin:0 0;">Laser</span>
<svg class="a" style="left:1328px;top:475px;" width="11" height="11" viewBox="0 0 11 11"><path d="M3.600 3V1.200H9.600V6.600H7.400" fill="none" stroke="#3a2420" stroke-width="1.300"/><rect x="1.400" y="3.800" width="6" height="5.400" fill="none" stroke="#3a2420" stroke-width="1.300"/></svg>
<svg class="a" style="left:1349px;top:476px;" width="10" height="10" viewBox="0 0 10 10"><path d="M1.400 1.400L8.600 8.600M8.600 1.400L1.400 8.600" stroke="#3a2420" stroke-width="1.500"/></svg>
<span class="t" style="left:938.00px;top:495px;font-size:11px;line-height:15px;letter-spacing:-0.049px;">Ready</span>
<div class="a btn" style="left:940px;top:513px;width:138px;height:36px;"></div>
<svg class="a" style="left:985px;top:523px;" width="15" height="16" viewBox="0 0 15 16"><rect x="0" y="0" width="5" height="15.500" rx="0.800" fill="#000"/><rect x="8.800" y="0" width="5.300" height="15.500" rx="0.800" fill="#000"/></svg>
<span class="t" style="left:1002.80px;top:525px;font-size:11px;line-height:15px;letter-spacing:-0.323px;">Pausa</span>
<div class="a btn" style="left:1083px;top:513px;width:138px;height:36px;"></div>
<div class="a " style="left:1131px;top:523px;width:16px;height:15.5px;background:#000;"></div>
<span class="t" style="left:1149.70px;top:525px;font-size:11px;line-height:15px;letter-spacing:0.224px;">Stop</span>
<div class="a btn" style="left:1226px;top:513px;width:138px;height:36px;"></div>
<svg class="a" style="left:1271px;top:523px;" width="16" height="16" viewBox="0 0 16 16"><path d="M1 0.200L15 8L1 15.800Z" fill="#000"/></svg>
<span class="t" style="left:1290.00px;top:525px;font-size:11px;line-height:15px;letter-spacing:0.200px;">Avvia</span>
<div class="a btn" style="left:940px;top:552px;width:102px;height:37px;"></div>
<svg class="a" style="left:965px;top:561px;" width="18" height="18" viewBox="0 0 18 18"><path d="M7.600 2H2V7.600M10.400 2H16V7.600M2 10.400V15.700H7.600M16 10.400V15.700H10.400" fill="none" stroke="#000" stroke-width="2.200"/></svg>
<span class="t" style="left:984.90px;top:564px;font-size:11px;line-height:15px;letter-spacing:-0.245px;">Frame</span>
<div class="a btn" style="left:1047px;top:552px;width:103px;height:37px;"></div>
<svg class="a" style="left:1072px;top:561px;" width="18" height="18" viewBox="0 0 18 18"><circle cx="9" cy="8.950" r="6.750" fill="none" stroke="#000" stroke-width="2" stroke-dasharray="5 2.070" stroke-dashoffset="5.500"/></svg>
<span class="t" style="left:1091.90px;top:564px;font-size:11px;line-height:15px;letter-spacing:-0.245px;">Frame</span>
<div class="a btn" style="left:1155px;top:552px;width:102px;height:37px;"></div>
<span class="t" style="left:1173.80px;top:564px;font-size:11px;line-height:15px;letter-spacing:-0.353px;">Salva GCode</span>
<div class="a btn" style="left:1262px;top:552px;width:102px;height:37px;"></div>
<span class="t" style="left:1279.50px;top:564px;font-size:11px;line-height:15px;letter-spacing:-0.439px;">EseguiGCode</span>
<div class="a btn" style="left:940px;top:592px;width:104px;height:22px;"></div>
<svg class="a" style="left:938px;top:590px;" width="80" height="30" viewBox="0 0 1354 508"><path d="M100 212L218 112L340 212" fill="none" stroke="#000" stroke-width="30" stroke-linecap="round" stroke-linejoin="miter"/><rect x="122" y="100" width="30" height="80" fill="#000"/><path d="M137 215V318H303V215" fill="#fff" stroke="#000" stroke-width="32" stroke-linejoin="round"/><rect x="193" y="225" width="54" height="95" fill="#000"/></svg>
<span class="t" style="left:961.90px;top:597px;font-size:11px;line-height:15px;letter-spacing:-0.334px;">Posizione iniziale</span>
<div class="a btn" style="left:1052px;top:592px;width:88px;height:21px;"></div>
<span class="t" style="left:1064.20px;top:596px;font-size:11px;line-height:15px;letter-spacing:-0.190px;">Vai all&#x27;origine</span>
<span class="t" style="left:1191.80px;top:597px;font-size:11px;line-height:15px;letter-spacing:0.019px;">Inizia da:</span>
<div class="a btn" style="left:1243px;top:594px;width:120px;height:19px;"></div>
<span class="t" style="left:1246.10px;top:597px;font-size:11px;line-height:15px;letter-spacing:-0.086px;">Coordinate assolute</span>
<svg class="a" style="left:1349.5px;top:599.9px;" width="12" height="8" viewBox="0 0 12 8"><path d="M0.6 2L4.8 6L9.0 2" fill="none" stroke="#444" stroke-width="1.1"/></svg>
<div class="a " style="left:1245px;top:615px;width:120px;height:53px;border:1px solid #dcdcdc;"></div>
<svg class="a" style="left:1245px;top:615px;" width="109" height="53" viewBox="0 0 109 53"><circle cx="7.5" cy="10.2" r="5.800" fill="#fff" stroke="#c8c8c8" stroke-width="1"/><circle cx="46.6" cy="10.2" r="5.800" fill="#fff" stroke="#c8c8c8" stroke-width="1"/><circle cx="84.6" cy="10.2" r="5.800" fill="#fff" stroke="#c8c8c8" stroke-width="1"/><circle cx="7.5" cy="26.1" r="5.800" fill="#fff" stroke="#c8c8c8" stroke-width="1"/><circle cx="46.6" cy="26.1" r="5.800" fill="#fff" stroke="#c8c8c8" stroke-width="1"/><circle cx="84.6" cy="26.1" r="5.800" fill="#fff" stroke="#c8c8c8" stroke-width="1"/><circle cx="7.5" cy="42.2" r="5.800" fill="#fff" stroke="#c8c8c8" stroke-width="1"/><circle cx="46.6" cy="42.2" r="5.800" fill="#fff" stroke="#c8c8c8" stroke-width="1"/><circle cx="84.6" cy="42.2" r="5.800" fill="#fff" stroke="#c8c8c8" stroke-width="1"/><circle cx="84.6" cy="10.2" r="3" fill="#c4c4c4"/></svg>
<span class="t" style="left:1169.00px;top:636px;font-size:11px;line-height:15px;letter-spacing:-0.083px;">Origine lavoro</span>
<svg class="a" style="left:938.9px;top:655.8px;" width="17" height="11" viewBox="0 0 17 11"><rect x="6.500" y="1.600" width="9.500" height="7" rx="2" fill="#8c0000" stroke="#3a2a2a" stroke-width="0.600"/><rect x="0.500" y="0.500" width="7.600" height="9.200" rx="2.400" fill="#e2d8d8" stroke="#111" stroke-width="1"/></svg>
<svg class="a" style="left:1347.6px;top:376.8px;" width="17" height="11" viewBox="0 0 17 11"><rect x="6.500" y="1.600" width="9.500" height="7" rx="2" fill="#8c0000" stroke="#3a2a2a" stroke-width="0.600"/><rect x="0.500" y="0.500" width="7.600" height="9.200" rx="2.400" fill="#e2d8d8" stroke="#111" stroke-width="1"/></svg>
<span class="t" style="left:959.90px;top:655px;font-size:11px;line-height:15px;letter-spacing:-0.083px;">Taglia la grafica selezionata</span>
<svg class="a" style="left:938.9px;top:675.8px;" width="17" height="11" viewBox="0 0 17 11"><rect x="6.500" y="1.600" width="9.500" height="7" rx="2" fill="#2b2b2b" stroke="#3a2a2a" stroke-width="0.600"/><rect x="0.500" y="0.500" width="7.600" height="9.200" rx="2.400" fill="#c0c0c0" stroke="#111" stroke-width="1"/></svg>
<span class="t" style="left:959.90px;top:675px;font-size:11px;line-height:15px;letter-spacing:-0.219px;color:#8a8a8a;">Usa origine selezione</span>
<svg class="a" style="left:938.9px;top:699px;" width="17" height="11" viewBox="0 0 17 11"><rect x="0.400" y="1.600" width="9.500" height="7" rx="2" fill="#00e000" stroke="#2a3a2a" stroke-width="0.600"/><rect x="8" y="0.500" width="7.600" height="9.200" rx="2.400" fill="#e8f0e8" stroke="#111" stroke-width="1"/></svg>
<span class="t" style="left:959.90px;top:698px;font-size:11px;line-height:15px;letter-spacing:-0.134px;">Ottimizza il percorso di taglio</span>
<div class="a " style="left:1148px;top:670px;width:216px;height:22px;background:#cce4f7;border:1px solid #0078d7;box-shadow:inset 0 0 0 0.500px #0078d7;"></div>
<svg class="a" style="left:1190px;top:673px;" width="16" height="16" viewBox="0 0 16 16"><path d="M0.400 8.200H2.800M4.800 8.200H6M10 8.200H11.200M13.200 8.200H15.600M8 0.600V3M8 13.400V15.800" stroke="#000" stroke-width="1.700"/><path d="M5.400 8.200H10.600M8 4.400V12" stroke="#f01010" stroke-width="1.800"/></svg>
<span class="t" style="left:1208.90px;top:675px;font-size:11px;line-height:15px;letter-spacing:-0.189px;">Mostra ultima posizione</span>
<div class="a btn" style="left:1148px;top:695px;width:216px;height:20px;"></div>
<span class="t" style="left:1189.90px;top:698px;font-size:11px;line-height:15px;letter-spacing:-0.158px;">Impostazioni ottimizzazione</span>
<div class="a btn" style="left:941px;top:718px;width:72px;height:22px;"></div>
<div class="a btn" style="left:1020px;top:718px;width:170px;height:22px;"></div>
<div class="a btn" style="left:1196px;top:718px;width:168px;height:22px;"></div>
</div></body></html>
